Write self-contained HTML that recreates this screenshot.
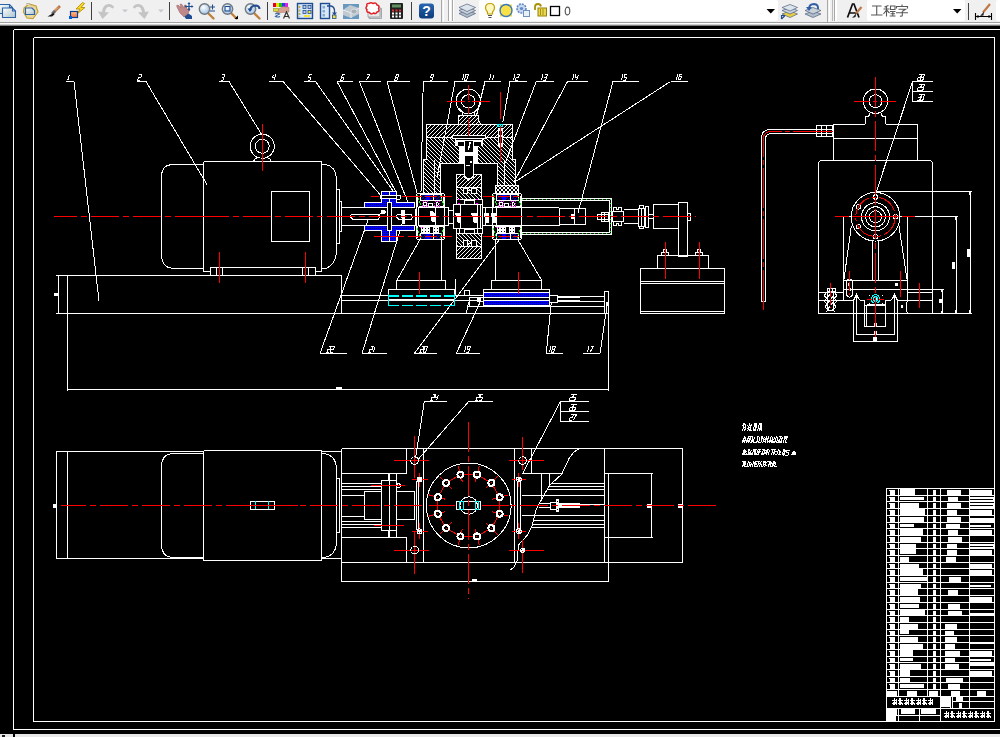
<!DOCTYPE html>
<html><head><meta charset="utf-8"><title>CAD</title>
<style>
html,body{margin:0;padding:0;background:#000;}
body{width:1000px;height:737px;overflow:hidden;position:relative;font-family:"Liberation Sans",sans-serif;}
#cad{position:absolute;left:0;top:0;width:1000px;height:737px;}

#tb{position:absolute;left:0;top:0;width:1000px;height:26px;}
#sb{position:absolute;left:0;top:734px;width:1000px;height:3px;}
</style></head><body>
<svg id="cad" width="1000" height="737" viewBox="0 0 1000 737" shape-rendering="crispEdges" fill="none" stroke="#fff">
<defs>
<pattern id="h1" width="4" height="4" patternUnits="userSpaceOnUse"><path d="M-1 5L5 -1M-1 1L1 -1M3 5L5 3" stroke="#fff" stroke-width="1"/></pattern>
<pattern id="h2" width="4" height="4" patternUnits="userSpaceOnUse"><path d="M-1 -1L5 5M3 -1L5 1M-1 3L1 5" stroke="#fff" stroke-width="1"/></pattern>
<pattern id="hb" width="3" height="3" patternUnits="userSpaceOnUse"><rect width="3" height="3" fill="#000" stroke="none"/><path d="M-1 4L4 -1M-1 1L1 -1M2 4L4 2" stroke="#0000ff" stroke-width="1.3"/></pattern>
<pattern id="hx" width="2" height="2" patternUnits="userSpaceOnUse"><rect width="2" height="2" fill="#0000ff" stroke="none"/><rect width="1" height="1" fill="#000060" stroke="none"/></pattern>
</defs>
<rect x="0" y="0" width="1000" height="737" fill="#000" stroke="none"/>
<path d="M13.5 29.5L1000 29.5" stroke="#fff"/>
<path d="M13.5 29.5L13.5 729.5" stroke="#fff"/>
<path d="M13.5 729.5L1000 729.5" stroke="#fff"/>
<path d="M33.5 37.5L994.5 37.5" stroke="#fff"/>
<path d="M33.5 37.5L33.5 721.5" stroke="#fff"/>
<path d="M33.5 721.5L994.5 721.5" stroke="#fff"/>
<path d="M994.5 37.5L994.5 721.5" stroke="#fff"/>
<path d="M66 81.5L74 81.5" stroke="#fff"/>
<path d="M1.5 0V6" transform="translate(68.4 74.6) skewX(-18) scale(0.8 0.9)" vector-effect="non-scaling-stroke"/>
<path d="M74 81.5L99 301" stroke="#fff"/>
<path d="M137 81.5L146 81.5" stroke="#fff"/>
<path d="M0 0H3V3H0V6H3" transform="translate(139.4 74.6) skewX(-18) scale(0.8 0.9)" vector-effect="non-scaling-stroke"/>
<path d="M146 81.5L207.5 185.5" stroke="#fff"/>
<path d="M219 81.5L229 81.5" stroke="#fff"/>
<path d="M0 0H3V6H0M0 3H3" transform="translate(222.4 74.6) skewX(-18) scale(0.8 0.9)" vector-effect="non-scaling-stroke"/>
<path d="M229 81.5L262 135" stroke="#fff"/>
<path d="M269 81.5L283 81.5" stroke="#fff"/>
<path d="M0 0V3H3M3 0V6" transform="translate(273.4 74.6) skewX(-18) scale(0.8 0.9)" vector-effect="non-scaling-stroke"/>
<path d="M283 81.5L380 194.6" stroke="#fff"/>
<path d="M304 81.5L315.5 81.5" stroke="#fff"/>
<path d="M3 0H0V3H3V6H0" transform="translate(309.4 74.6) skewX(-18) scale(0.8 0.9)" vector-effect="non-scaling-stroke"/>
<path d="M315.5 81.5L394 192.2" stroke="#fff"/>
<path d="M337 81.5L352.5 81.5" stroke="#fff"/>
<path d="M3 0H0V6H3V3H0" transform="translate(342.4 74.6) skewX(-18) scale(0.8 0.9)" vector-effect="non-scaling-stroke"/>
<path d="M337 81.5L396.4 192.8" stroke="#fff"/>
<path d="M359 81.5L381 81.5" stroke="#fff"/>
<path d="M0 0H3L1 6" transform="translate(367.4 74.6) skewX(-18) scale(0.8 0.9)" vector-effect="non-scaling-stroke"/>
<path d="M359.25 81.5L409 204.8" stroke="#fff"/>
<path d="M387 81.5L409.5 81.5" stroke="#fff"/>
<path d="M0 0H3V6H0ZM0 3H3" transform="translate(396.4 74.6) skewX(-18) scale(0.8 0.9)" vector-effect="non-scaling-stroke"/>
<path d="M387 81.5L417.4 194" stroke="#fff"/>
<path d="M423 81.5L447.5 81.5" stroke="#fff"/>
<path d="M3 3H0V0H3V6H0" transform="translate(431.4 74.6) skewX(-18) scale(0.8 0.9)" vector-effect="non-scaling-stroke"/>
<path d="M423.25 81.5L421 192" stroke="#fff"/>
<path d="M455 81.5L475.5 81.5" stroke="#fff"/>
<path d="M1.5 0V6" transform="translate(462.8 74.6) skewX(-18) scale(0.8 0.9)" vector-effect="non-scaling-stroke"/>
<path d="M0 0H3V6H0Z" transform="translate(466 74.6) skewX(-18) scale(0.8 0.9)" vector-effect="non-scaling-stroke"/>
<path d="M455 81.5L437 178" stroke="#fff"/>
<path d="M485 81.5L500.5 81.5" stroke="#fff"/>
<path d="M1.5 0V6" transform="translate(489.8 74.6) skewX(-18) scale(0.8 0.9)" vector-effect="non-scaling-stroke"/>
<path d="M1.5 0V6" transform="translate(493 74.6) skewX(-18) scale(0.8 0.9)" vector-effect="non-scaling-stroke"/>
<path d="M485 81.5L476.5 115.5" stroke="#fff"/>
<path d="M510 81.5L527 81.5" stroke="#fff"/>
<path d="M1.5 0V6" transform="translate(513.8 74.6) skewX(-18) scale(0.8 0.9)" vector-effect="non-scaling-stroke"/>
<path d="M0 0H3V3H0V6H3" transform="translate(517 74.6) skewX(-18) scale(0.8 0.9)" vector-effect="non-scaling-stroke"/>
<path d="M510 81.5L502.9 122" stroke="#fff"/>
<path d="M536 81.5L554 81.5" stroke="#fff"/>
<path d="M1.5 0V6" transform="translate(541.8 74.6) skewX(-18) scale(0.8 0.9)" vector-effect="non-scaling-stroke"/>
<path d="M0 0H3V6H0M0 3H3" transform="translate(545 74.6) skewX(-18) scale(0.8 0.9)" vector-effect="non-scaling-stroke"/>
<path d="M536.25 81.5L504 166" stroke="#fff"/>
<path d="M567.5 81.5L587.5 81.5" stroke="#fff"/>
<path d="M1.5 0V6" transform="translate(572.8 74.6) skewX(-18) scale(0.8 0.9)" vector-effect="non-scaling-stroke"/>
<path d="M0 0V3H3M3 0V6" transform="translate(576 74.6) skewX(-18) scale(0.8 0.9)" vector-effect="non-scaling-stroke"/>
<path d="M567.5 81.5L513.75 182.5" stroke="#fff"/>
<path d="M613 81.5L639 81.5" stroke="#fff"/>
<path d="M1.5 0V6" transform="translate(621.8 74.6) skewX(-18) scale(0.8 0.9)" vector-effect="non-scaling-stroke"/>
<path d="M3 0H0V3H3V6H0" transform="translate(625 74.6) skewX(-18) scale(0.8 0.9)" vector-effect="non-scaling-stroke"/>
<path d="M613 81.5L578 213" stroke="#fff"/>
<path d="M670.5 81.5L687.5 81.5" stroke="#fff"/>
<path d="M1.5 0V6" transform="translate(676.8 74.1) skewX(-18) scale(0.8 0.9)" vector-effect="non-scaling-stroke"/>
<path d="M3 0H0V6H3V3H0" transform="translate(680 74.1) skewX(-18) scale(0.8 0.9)" vector-effect="non-scaling-stroke"/>
<path d="M670.5 81.5L514 182.5" stroke="#fff"/>
<path d="M320 353.5L347 353.5" stroke="#fff"/>
<path d="M0 0H3V3H0V6H3" transform="translate(328.8 346.6) skewX(-18) scale(0.8 0.9)" vector-effect="non-scaling-stroke"/>
<path d="M0 0H3V3H0V6H3" transform="translate(332 346.6) skewX(-18) scale(0.8 0.9)" vector-effect="non-scaling-stroke"/>
<path d="M320 353.5L368.5 219" stroke="#fff"/>
<path d="M362 353.5L387 353.5" stroke="#fff"/>
<path d="M0 0H3V3H0V6H3" transform="translate(370.8 346.6) skewX(-18) scale(0.8 0.9)" vector-effect="non-scaling-stroke"/>
<path d="M1.5 0V6" transform="translate(374 346.6) skewX(-18) scale(0.8 0.9)" vector-effect="non-scaling-stroke"/>
<path d="M362 353.5L404 218" stroke="#fff"/>
<path d="M414 353.5L437 353.5" stroke="#fff"/>
<path d="M0 0H3V3H0V6H3" transform="translate(421.8 346.6) skewX(-18) scale(0.8 0.9)" vector-effect="non-scaling-stroke"/>
<path d="M0 0H3V6H0Z" transform="translate(425 346.6) skewX(-18) scale(0.8 0.9)" vector-effect="non-scaling-stroke"/>
<path d="M414.25 353.5L506 231" stroke="#fff"/>
<path d="M456 353.5L480 353.5" stroke="#fff"/>
<path d="M1.5 0V6" transform="translate(464.8 346.6) skewX(-18) scale(0.8 0.9)" vector-effect="non-scaling-stroke"/>
<path d="M3 3H0V0H3V6H0" transform="translate(468 346.6) skewX(-18) scale(0.8 0.9)" vector-effect="non-scaling-stroke"/>
<path d="M456.25 353.5L480 302.5" stroke="#fff"/>
<path d="M546 353.5L562.5 353.5" stroke="#fff"/>
<path d="M1.5 0V6" transform="translate(549.8 346.6) skewX(-18) scale(0.8 0.9)" vector-effect="non-scaling-stroke"/>
<path d="M0 0H3V6H0ZM0 3H3" transform="translate(553 346.6) skewX(-18) scale(0.8 0.9)" vector-effect="non-scaling-stroke"/>
<path d="M546.25 353.5L551.25 302.5" stroke="#fff"/>
<path d="M583 353.5L600 353.5" stroke="#fff"/>
<path d="M1.5 0V6" transform="translate(587.8 346.6) skewX(-18) scale(0.8 0.9)" vector-effect="non-scaling-stroke"/>
<path d="M0 0H3L1 6" transform="translate(591 346.6) skewX(-18) scale(0.8 0.9)" vector-effect="non-scaling-stroke"/>
<path d="M600 353.5L607.5 302.5" stroke="#fff"/>
<path d="M56 275.5L341.5 275.5" stroke="#fff"/>
<path d="M56 313.5L609 313.5" stroke="#fff"/>
<path d="M341.5 275.5L341.5 313.5" stroke="#fff"/>
<path d="M67.5 275.5L67.5 390.5" stroke="#fff"/>
<path d="M58.5 275.5L58.5 313.5" stroke="#fff"/>
<rect x="54" y="293" width="4" height="3" fill="#fff" stroke="none"/>
<path d="M67.5 389.5L609 389.5" stroke="#fff"/>
<path d="M608.5 313.5L608.5 390.5" stroke="#fff"/>
<rect x="336" y="387" width="6" height="2" fill="#fff" stroke="none"/>
<path d="M203.5 164.5H171.5Q161.5 165.5 161.5 176.5V256.5Q162.5 267.5 172.5 268.5H203.5" stroke="#fff" fill="none" />
<path d="M203.5 161.5L321.5 161.5" stroke="#fff"/>
<path d="M203.5 161.5L203.5 271.5" stroke="#fff"/>
<path d="M321.5 161.5L321.5 271.5" stroke="#fff"/>
<path d="M203.5 271.5L210 271.5" stroke="#fff"/>
<path d="M315 271.5L321.5 271.5" stroke="#fff"/>
<path d="M210.5 267.5L315.5 267.5" stroke="#fff"/>
<rect x="210.5" y="267.5" width="12" height="8" stroke="#fff" fill="none"/>
<path d="M216.5 267.5L216.5 275.5" stroke="#fff"/>
<rect x="302.5" y="267.5" width="13" height="8" stroke="#fff" fill="none"/>
<path d="M308.5 267.5L308.5 275.5" stroke="#fff"/>
<rect x="271.5" y="191.5" width="38" height="50" stroke="#fff" fill="none"/>
<circle cx="262.25" cy="146.25" r="12" stroke="#fff" fill="none"/>
<circle cx="262.25" cy="146.25" r="7" stroke="#fff" fill="none"/>
<path d="M253.5 161.5Q254.5 158.5 257.5 157.5M271.5 161.5Q270.5 158.5 267.5 157.5" stroke="#fff" fill="none" />
<path d="M321.5 164.5H326Q335.5 166.5 336.5 178.5V252.5Q335.5 264.5 326 268.5H321.5" stroke="#fff" fill="none" />
<rect x="336.5" y="189.5" width="3" height="54" stroke="#fff" fill="none"/>
<rect x="339.5" y="201.5" width="2" height="30" stroke="#fff" fill="none"/>
<path d="M341.5 207.5L387 207.5" stroke="#fff"/>
<path d="M341.5 225.5L387 225.5" stroke="#fff"/>
<path d="M351.5 214.5H378Q380.5 217 378 219.5H353.5Q350.5 218.5 350.5 215.5Z" stroke="#fff" fill="none" />
<path d="M364.5 202.5L381.5 202.5L381.5 191.5L396.5 191.5L396.5 202.5L414.5 202.5L414.5 207.5L364.5 207.5Z" fill="url(#hx)" stroke="#fff"/>
<path d="M364.5 225.5L414.5 225.5L414.5 230.5L396.5 230.5L396.5 241.5L381.5 241.5L381.5 230.5L364.5 230.5Z" fill="url(#hx)" stroke="#fff"/>
<path d="M389.5 191L389.5 203" stroke="#fff"/>
<path d="M389.5 230L389.5 242" stroke="#fff"/>
<rect x="387.5" y="202.5" width="4" height="28" stroke="#fff" fill="#000"/>
<rect x="380" y="195" width="20" height="4" fill="#fff" stroke="none"/>
<rect x="382" y="196" width="14" height="2" fill="#000" stroke="none"/>
<circle cx="398.5" cy="197.3" r="2.2" stroke="#fff" fill="#000"/>
<path d="M397.5 214.5H411Q413.5 217 411 219.5H399.5Q396.5 218.5 396.5 215.5Z" stroke="#fff" fill="none" />
<path d="M415.5 208.5L415.5 225.5" stroke="#fff"/>
<rect x="418.5" y="207.5" width="30" height="18" stroke="#fff" fill="none"/>
<path d="M435.5 207.5L435.5 225.5" stroke="#fff"/>
<rect x="448.5" y="210.5" width="5" height="13" stroke="#fff" fill="none"/>
<path d="M482 207.5L559 207.5" stroke="#fff"/>
<path d="M482 225.5L559 225.5" stroke="#fff"/>
<path d="M485.5 207.5L485.5 225.5" stroke="#fff"/>
<path d="M496.5 207.5L496.5 225.5" stroke="#fff"/>
<path d="M418.5 193.5H442.5Q444.5 193.5 444.5 195.5V237.5Q444.5 239.5 442.5 239.5H418.5Q416.5 239.5 416.5 237.5V195.5Q416.5 193.5 418.5 193.5Z" stroke="#fff" fill="none" />
<path d="M417.5 195.5L417.5 207" stroke="#fff"/>
<path d="M443.5 195.5L443.5 207" stroke="#fff"/>
<path d="M417.5 226L417.5 237.5" stroke="#fff"/>
<path d="M443.5 226L443.5 237.5" stroke="#fff"/>
<rect x="420.5" y="195" width="21" height="5" fill="url(#hb)" stroke="none"/>
<rect x="425.5" y="195" width="4" height="5" fill="#0000ff" stroke="none"/>
<rect x="420.5" y="194.5" width="21" height="6" stroke="#fff" fill="none"/>
<path d="M433.5 194L433.5 200" stroke="#fff"/>
<rect x="420.5" y="234" width="21" height="5" fill="url(#hb)" stroke="none"/>
<rect x="425.5" y="234" width="4" height="5" fill="#0000ff" stroke="none"/>
<rect x="420.5" y="233.5" width="21" height="6" stroke="#fff" fill="none"/>
<path d="M433.5 233L433.5 239" stroke="#fff"/>
<path d="M418.5 206.5L442.5 206.5" stroke="#fff"/>
<rect x="422.5" y="201.5" width="5" height="5" stroke="#ff00ff" fill="none" stroke-dasharray="1 1"/>
<circle cx="425" cy="204" r="1.6" stroke="#fff" fill="none"/>
<rect x="428.5" y="203.5" width="4" height="3" stroke="#fff" fill="none"/>
<rect x="434.5" y="201.5" width="5" height="5" stroke="#ff00ff" fill="none" stroke-dasharray="1 1"/>
<path d="M436 202.5V205.5H437.5Q439.5 204 437.5 202.5Z" stroke="#fff" fill="none" />
<path d="M418.5 226.5L442.5 226.5" stroke="#fff"/>
<rect x="421.5" y="227.5" width="2" height="2" stroke="#fff" fill="none"/>
<rect x="421.5" y="230.5" width="2" height="2" stroke="#fff" fill="none"/>
<rect x="424.5" y="227.5" width="2" height="2" stroke="#fff" fill="none"/>
<rect x="424.5" y="230.5" width="2" height="2" stroke="#fff" fill="none"/>
<rect x="427.5" y="227.5" width="2" height="2" stroke="#fff" fill="none"/>
<rect x="427.5" y="230.5" width="2" height="2" stroke="#fff" fill="none"/>
<rect x="433.5" y="227.5" width="2" height="2" stroke="#fff" fill="none"/>
<rect x="433.5" y="230.5" width="2" height="2" stroke="#fff" fill="none"/>
<rect x="436.5" y="227.5" width="2" height="2" stroke="#fff" fill="none"/>
<rect x="436.5" y="230.5" width="2" height="2" stroke="#fff" fill="none"/>
<path d="M419.5 227.5L423.5 227.5" stroke="#ff00ff" stroke-dasharray="1 1"/>
<path d="M417.5 195L420.5 205" stroke="#00ff00" stroke-dasharray="2 1"/>
<path d="M440.5 195L443.5 205" stroke="#00ff00" stroke-dasharray="2 1"/>
<path d="M417.5 228L420.5 238" stroke="#00ff00" stroke-dasharray="2 1"/>
<path d="M440.5 238L443.5 228" stroke="#00ff00" stroke-dasharray="2 1"/>
<path d="M494.5 193.5H519.5Q521.5 193.5 521.5 195.5V237.5Q521.5 239.5 519.5 239.5H494.5Q492.5 239.5 492.5 237.5V195.5Q492.5 193.5 494.5 193.5Z" stroke="#fff" fill="none" />
<path d="M493.5 195.5L493.5 207" stroke="#fff"/>
<path d="M520.5 195.5L520.5 207" stroke="#fff"/>
<path d="M493.5 226L493.5 237.5" stroke="#fff"/>
<path d="M520.5 226L520.5 237.5" stroke="#fff"/>
<rect x="496.5" y="195" width="22" height="5" fill="url(#hb)" stroke="none"/>
<rect x="502" y="195" width="4" height="5" fill="#0000ff" stroke="none"/>
<rect x="496.5" y="194.5" width="22" height="6" stroke="#fff" fill="none"/>
<path d="M510.5 194L510.5 200" stroke="#fff"/>
<rect x="496.5" y="234" width="22" height="5" fill="url(#hb)" stroke="none"/>
<rect x="502" y="234" width="4" height="5" fill="#0000ff" stroke="none"/>
<rect x="496.5" y="233.5" width="22" height="6" stroke="#fff" fill="none"/>
<path d="M510.5 233L510.5 239" stroke="#fff"/>
<path d="M494.5 206.5L519.5 206.5" stroke="#fff"/>
<rect x="498.5" y="201.5" width="5" height="5" stroke="#ff00ff" fill="none" stroke-dasharray="1 1"/>
<circle cx="501" cy="204" r="1.6" stroke="#fff" fill="none"/>
<rect x="504.5" y="203.5" width="4" height="3" stroke="#fff" fill="none"/>
<rect x="510.5" y="201.5" width="5" height="5" stroke="#ff00ff" fill="none" stroke-dasharray="1 1"/>
<path d="M512 202.5V205.5H513.5Q515.5 204 513.5 202.5Z" stroke="#fff" fill="none" />
<path d="M494.5 226.5L519.5 226.5" stroke="#fff"/>
<rect x="497.5" y="227.5" width="2" height="2" stroke="#fff" fill="none"/>
<rect x="497.5" y="230.5" width="2" height="2" stroke="#fff" fill="none"/>
<rect x="500.5" y="227.5" width="2" height="2" stroke="#fff" fill="none"/>
<rect x="500.5" y="230.5" width="2" height="2" stroke="#fff" fill="none"/>
<rect x="503.5" y="227.5" width="2" height="2" stroke="#fff" fill="none"/>
<rect x="503.5" y="230.5" width="2" height="2" stroke="#fff" fill="none"/>
<rect x="509.5" y="227.5" width="2" height="2" stroke="#fff" fill="none"/>
<rect x="509.5" y="230.5" width="2" height="2" stroke="#fff" fill="none"/>
<rect x="512.5" y="227.5" width="2" height="2" stroke="#fff" fill="none"/>
<rect x="512.5" y="230.5" width="2" height="2" stroke="#fff" fill="none"/>
<path d="M495.5 227.5L499.5 227.5" stroke="#ff00ff" stroke-dasharray="1 1"/>
<path d="M493.5 195L496.5 205" stroke="#00ff00" stroke-dasharray="2 1"/>
<path d="M517.5 195L520.5 205" stroke="#00ff00" stroke-dasharray="2 1"/>
<path d="M493.5 228L496.5 238" stroke="#00ff00" stroke-dasharray="2 1"/>
<path d="M517.5 238L520.5 228" stroke="#00ff00" stroke-dasharray="2 1"/>
<circle cx="468.3" cy="101.4" r="12.3" stroke="#fff" fill="none"/>
<circle cx="468.3" cy="101.4" r="6.7" stroke="#fff" fill="none"/>
<path d="M459.4 108.3L462.5 111.5L462.5 115.5" stroke="#fff" fill="none"/>
<path d="M477.8 108.3L474.5 111.5L474.5 115.5" stroke="#fff" fill="none"/>
<rect x="468" y="101" width="2" height="1" fill="#ff0000" stroke="none"/>
<path d="M458.5 115.5L478.5 115.5L478.5 121L481.5 124.5L458.5 124.5Z" fill="url(#h1)" stroke="#fff"/>
<path d="M426.5 124.5L512.5 124.5L512.5 137.5L426.5 137.5Z" fill="url(#h1)" stroke="#fff"/>
<path d="M426.5 137.5L455.5 137.5L455.5 145.5L459.5 145.5L459.5 163.5L440.5 163.5L440.5 193.5L423.5 193.5L423.5 159.5L426.5 159.5Z" fill="url(#h2)" stroke="#fff"/>
<path d="M512.5 137.5L482.5 137.5L482.5 145.5L477.5 145.5L477.5 163.5L497.5 163.5L497.5 185.5L515.5 185.5L515.5 159.5L512.5 159.5Z" fill="url(#h2)" stroke="#fff"/>
<path d="M434.5 160L434.5 193" stroke="#fff"/>
<path d="M504.5 160L504.5 185" stroke="#fff"/>
<path d="M495.5 185.5H518.5V193.5H495.5Z" fill="url(#h2)" stroke="#fff"/>
<path d="M495.5 185.5H518.5V193.5H495.5Z" fill="url(#h1)" stroke="none"/>
<rect x="452.5" y="135.5" width="33" height="3" stroke="#fff" fill="#000"/>
<rect x="455" y="140" width="28" height="6" fill="#fff" stroke="none"/>
<rect x="460" y="140" width="18" height="24" fill="#fff" stroke="none"/>
<rect x="458" y="142" width="6" height="4" fill="#000" stroke="none"/>
<rect x="474" y="142" width="7" height="4" fill="#000" stroke="none"/>
<rect x="465" y="141" width="8" height="11" fill="#000" stroke="none"/>
<rect x="465" y="156" width="8" height="10" fill="#000" stroke="none"/>
<rect x="465" y="168" width="8" height="9" fill="#000" stroke="none"/>
<path d="M469 142L471 142L469 150L468 150Z" stroke="none" fill="#fff"/>
<rect x="470" y="161" width="2" height="2" fill="#fff" stroke="none"/>
<rect x="466" y="165" width="4" height="1" fill="#fff" stroke="none"/>
<path d="M464.5 164L464.5 176" stroke="#fff"/>
<path d="M473.5 164L473.5 176" stroke="#fff"/>
<path d="M464.5 176Q468.5 181 473.5 176" stroke="#fff" fill="none" />
<rect x="497" y="124" width="6" height="3" fill="#00ffff" stroke="none"/>
<rect x="499" y="125" width="1" height="1" fill="#000" stroke="none"/>
<rect x="501" y="125" width="1" height="1" fill="#000" stroke="none"/>
<rect x="498" y="128" width="5" height="19" fill="#fff" stroke="none"/>
<rect x="499" y="131" width="3" height="4" fill="#000" stroke="none"/>
<rect x="499" y="137" width="3" height="6" fill="#000" stroke="none"/>
<path d="M456.5 174.5L464.5 174.5L464.5 177L468.5 180L473.5 177L473.5 174.5L481.5 174.5L481.5 187.5L456.5 187.5Z" fill="url(#h1)" stroke="#fff"/>
<path d="M456.5 187.5L481.5 187.5L481.5 199.5L456.5 199.5Z" fill="url(#h2)" stroke="#fff"/>
<rect x="463.5" y="188.5" width="4" height="5" stroke="#fff" fill="#000"/>
<rect x="471.5" y="188.5" width="5" height="5" stroke="#fff" fill="#000"/>
<path d="M467 190.5L471 190.5" stroke="#fff"/>
<rect x="456.5" y="199.5" width="26" height="5" stroke="#fff" fill="#000"/>
<rect x="464.5" y="200.5" width="10" height="4" stroke="#fff" fill="#000"/>
<path d="M458 199.5L462 199.5" stroke="#ff00ff" stroke-dasharray="2 2"/>
<path d="M476 199.5L480 199.5" stroke="#ff00ff" stroke-dasharray="2 2"/>
<path d="M458 203.5L462 203.5" stroke="#ff00ff" stroke-dasharray="2 2"/>
<path d="M476 203.5L480 203.5" stroke="#ff00ff" stroke-dasharray="2 2"/>
<rect x="453.5" y="204.5" width="29" height="24" stroke="#fff" fill="#000"/>
<path d="M460.5 204.5L460.5 228.5" stroke="#fff"/>
<path d="M477.5 204.5L477.5 228.5" stroke="#fff"/>
<path d="M480.5 204.5L480.5 228.5" stroke="#fff"/>
<rect x="456.5" y="228.5" width="26" height="5" stroke="#fff" fill="#000"/>
<rect x="464.5" y="229.5" width="10" height="4" stroke="#fff" fill="#000"/>
<path d="M459.5 228L459.5 233" stroke="#fff"/>
<path d="M477.5 228L477.5 233" stroke="#fff"/>
<path d="M456.5 233.5L481.5 233.5L481.5 246.5L456.5 246.5Z" fill="url(#h2)" stroke="#fff"/>
<rect x="463.5" y="240.5" width="4" height="6" stroke="#fff" fill="#000"/>
<rect x="471.5" y="240.5" width="5" height="6" stroke="#fff" fill="#000"/>
<path d="M467 243.5L471 243.5" stroke="#fff"/>
<path d="M456.5 246.5L481.5 246.5L481.5 258.5L456.5 258.5Z" fill="url(#h1)" stroke="#fff"/>
<path d="M522 198.5L612 198.5" stroke="#fff"/>
<path d="M522 234.5L612 234.5" stroke="#fff"/>
<path d="M611.5 198L611.5 235" stroke="#fff"/>
<path d="M522 200.5L610 200.5" stroke="#fff"/>
<path d="M522 232.5L610 232.5" stroke="#fff"/>
<path d="M609.5 200L609.5 233" stroke="#fff"/>
<path d="M522 199.5L611 199.5" stroke="#00ff00" stroke-dasharray="1 3"/>
<path d="M522 233.5L611 233.5" stroke="#00ff00" stroke-dasharray="1 3"/>
<path d="M610.5 199L610.5 234" stroke="#00ff00" stroke-dasharray="1 3"/>
<path d="M559.5 207.5L559.5 225.5" stroke="#fff"/>
<rect x="559.5" y="208.5" width="26" height="16" stroke="#fff" fill="none"/>
<path d="M574.5 208.5L574.5 224.5" stroke="#fff"/>
<rect x="571" y="214" width="4" height="5" fill="#fff" stroke="none"/>
<rect x="597.5" y="214.5" width="12" height="5" stroke="#fff" fill="none"/>
<rect x="601.5" y="212.5" width="7" height="9" stroke="#fff" fill="none"/>
<path d="M604.5 212L604.5 221" stroke="#fff"/>
<rect x="612.5" y="211.5" width="11" height="10" stroke="#fff" fill="none"/>
<path d="M613.5 211.5V207.5H616.5V209.5H618.5V207.5H621.5V211.5M613.5 221.5V225.5H616.5V223.5H618.5V225.5H621.5V221.5" stroke="#fff" fill="none" />
<path d="M623.5 209.5L638 209.5" stroke="#fff"/>
<path d="M623.5 223.5L638 223.5" stroke="#fff"/>
<rect x="638.5" y="208.5" width="6" height="18" stroke="#fff" fill="none"/>
<path d="M641.5 208L641.5 226" stroke="#fff"/>
<path d="M639.5 208.5V205.5H643.5V208.5M639.5 226.5V228.5H643.5V226.5" stroke="#fff" fill="none" />
<rect x="645.5" y="206.5" width="3" height="21" stroke="#fff" fill="none"/>
<path d="M648 214.5L653 214.5" stroke="#fff"/>
<path d="M648 218.5L653 218.5" stroke="#fff"/>
<rect x="653.5" y="204.5" width="25" height="24" stroke="#fff" fill="none"/>
<rect x="678.5" y="202.5" width="9" height="54" stroke="#fff" fill="none"/>
<path d="M678.5 214L678.5 219" stroke="#fff"/>
<rect x="687.5" y="213.5" width="3" height="7" stroke="#fff" fill="none"/>
<rect x="657.5" y="255.5" width="51" height="13" stroke="#fff" fill="none"/>
<rect x="640.5" y="268.5" width="84" height="45" stroke="#fff" fill="none"/>
<path d="M640.5 281.5L724.5 281.5" stroke="#fff"/>
<path d="M640.5 283.5L724.5 283.5" stroke="#fff"/>
<path d="M640.5 311.5L724.5 311.5" stroke="#fff"/>
<rect x="661.5" y="252.5" width="7" height="3" stroke="#fff" fill="none"/>
<rect x="663.5" y="249.5" width="3" height="3" stroke="#fff" fill="none"/>
<rect x="695.5" y="252.5" width="7" height="3" stroke="#fff" fill="none"/>
<rect x="697.5" y="249.5" width="3" height="3" stroke="#fff" fill="none"/>
<path d="M420 239.5L397 280" stroke="#fff"/>
<path d="M441.5 239.5L441.5 280" stroke="#fff"/>
<path d="M396 280.5L446 280.5" stroke="#fff"/>
<path d="M396.5 280.5L396.5 289.5" stroke="#fff"/>
<path d="M445.5 280.5L445.5 289.5" stroke="#fff"/>
<path d="M495.5 239.5L495.5 280" stroke="#fff"/>
<path d="M518 240L541.5 280" stroke="#fff"/>
<path d="M491 280.5L542 280.5" stroke="#fff"/>
<path d="M491.5 280.5L491.5 289.5" stroke="#fff"/>
<path d="M541.5 280.5L541.5 289.5" stroke="#fff"/>
<path d="M388 289.5L455 289.5" stroke="#fff"/>
<path d="M388.5 289.5L388.5 306" stroke="#fff"/>
<path d="M454.5 289.5L454.5 306" stroke="#fff"/>
<path d="M388.5 294L388.5 306" stroke="#00ffff"/>
<path d="M454.5 294L454.5 306" stroke="#00ffff"/>
<path d="M388 295.5L455 295.5" stroke="#00ffff" stroke-width="2" stroke-dasharray="11 3"/>
<path d="M388 305.5L455 305.5" stroke="#00ffff" stroke-dasharray="11 3"/>
<rect x="389" y="299" width="65" height="2" fill="#fff" stroke="none"/>
<path d="M341.5 295.5L388 295.5" stroke="#fff"/>
<path d="M341.5 300.5L388 300.5" stroke="#fff"/>
<path d="M455.5 279L455.5 295" stroke="#fff"/>
<path d="M455 295.5L483 295.5" stroke="#fff"/>
<path d="M455 300.5L478 300.5" stroke="#fff"/>
<rect x="464.5" y="290.5" width="5" height="5" stroke="#fff" fill="none"/>
<path d="M469 297.5L478 297.5" stroke="#fff"/>
<path d="M469.5 297.5L469.5 306" stroke="#fff"/>
<path d="M469.5 300.5L467.5 306.5L466.5 313.5" stroke="#fff" fill="none"/>
<path d="M468 306.5L483 306.5" stroke="#fff"/>
<rect x="477.5" y="297.5" width="6" height="4" stroke="#fff" fill="none"/>
<rect x="478" y="298" width="3" height="3" fill="#fff" stroke="none"/>
<path d="M483 289.5L549.5 289.5" stroke="#fff"/>
<path d="M483.5 289.5L483.5 306.5" stroke="#fff"/>
<path d="M549.5 289.5L549.5 306.5" stroke="#fff"/>
<path d="M483 306.5L605 306.5" stroke="#fff"/>
<rect x="484" y="292" width="65" height="5" fill="url(#hx)" stroke="none"/>
<rect x="484" y="301" width="65" height="4" fill="url(#hx)" stroke="none"/>
<path d="M484 292.5L549 292.5" stroke="#fff"/>
<path d="M484 297.5L549 297.5" stroke="#fff"/>
<path d="M484 300.5L549 300.5" stroke="#fff"/>
<path d="M484 305.5L549 305.5" stroke="#fff"/>
<rect x="549.5" y="295.5" width="8" height="7" stroke="#fff" fill="none"/>
<rect x="557" y="296" width="23" height="2" fill="#fff" stroke="none"/>
<rect x="557" y="300" width="23" height="2" fill="#fff" stroke="none"/>
<path d="M580 296.5L605 296.5" stroke="#fff"/>
<path d="M580 301.5L605 301.5" stroke="#fff"/>
<rect x="604.5" y="291.5" width="4" height="22" stroke="#fff" fill="none"/>
<path d="M606.5 302L606.5 313" stroke="#fff"/>
<path d="M430 212L432 211L434 213L435 221L432 221L431 216Z" stroke="#fff" fill="#fff"/>
<path d="M455 213L460 213L460 222L458 222L457 217Z" stroke="#fff" fill="#fff"/>
<path d="M471 213L476 213L476 222L474 222L473 217Z" stroke="#fff" fill="#fff"/>
<path d="M484 213L488 213L488 222L486 222L485 217Z" stroke="#fff" fill="#fff"/>
<path d="M491 213L495 213L495 222L493 222L492 217Z" stroke="#fff" fill="#fff"/>
<path d="M401 211L404 210L405 223L403 224L402 218Z" stroke="#fff" fill="#fff"/>
<path d="M381 211L384 210L386 212L383 214Z" stroke="#fff" fill="#fff"/>
<path d="M378.5 216.5Q379 213.5 382.5 212.5" stroke="#fff" fill="none" />
<circle cx="875.5" cy="101.2" r="12.2" stroke="#fff" fill="none"/>
<circle cx="875.5" cy="101.2" r="6.5" stroke="#fff" fill="none"/>
<path d="M869.5 112.5V115Q869 116.5 865.5 117V123.5Q865 124.5 862 124.5H833.5V160.5H917.5V124.5H889Q886 124.5 885.5 123.5V117Q882 116.5 881.5 115V112.5" stroke="#fff" fill="none" />
<path d="M833.5 138.5L917.5 138.5" stroke="#fff"/>
<path d="M818.5 313.5V162.5L820.5 160.5H930.5L932.5 162.5V313.5" stroke="#fff" fill="none" />
<path d="M818.5 313.5L972 313.5" stroke="#fff"/>
<path d="M816.5 129.5H770Q761.5 130 761.5 138V301.5" stroke="#fff" fill="none" />
<path d="M816.5 133.5H771Q765.5 134 765.5 139V301.5" stroke="#fff" fill="none" />
<path d="M761.5 301.5L765.5 301.5" stroke="#fff"/>
<rect x="816.5" y="125.5" width="16" height="11" stroke="#fff" fill="none"/>
<path d="M816 129.5L832 129.5" stroke="#fff"/>
<path d="M816 133.5L832 133.5" stroke="#fff"/>
<path d="M821.5 125L821.5 136" stroke="#fff"/>
<path d="M826.5 125L826.5 136" stroke="#fff"/>
<path d="M912.5 81.5L933 81.5" stroke="#fff"/>
<path d="M912.5 91.5L933 91.5" stroke="#fff"/>
<path d="M912.5 101.5L933 101.5" stroke="#fff"/>
<path d="M912.5 81.5L912.5 101.5" stroke="#fff"/>
<path d="M0 0H3V3H0V6H3" transform="translate(919 74.6) skewX(-18) scale(0.8 0.9)" vector-effect="non-scaling-stroke"/>
<path d="M0 0H3V6H0ZM0 3H3" transform="translate(922.2 74.6) skewX(-18) scale(0.8 0.9)" vector-effect="non-scaling-stroke"/>
<path d="M0 0H3V3H0V6H3" transform="translate(919 84.6) skewX(-18) scale(0.8 0.9)" vector-effect="non-scaling-stroke"/>
<path d="M3 3H0V0H3V6H0" transform="translate(922.2 84.6) skewX(-18) scale(0.8 0.9)" vector-effect="non-scaling-stroke"/>
<path d="M0 0H3V6H0M0 3H3" transform="translate(919 94.6) skewX(-18) scale(0.8 0.9)" vector-effect="non-scaling-stroke"/>
<path d="M0 0H3V6H0Z" transform="translate(922.2 94.6) skewX(-18) scale(0.8 0.9)" vector-effect="non-scaling-stroke"/>
<path d="M912.5 81.5L876.5 191.5" stroke="#fff"/>
<circle cx="875.5" cy="216.8" r="24.3" stroke="#fff" fill="none"/>
<circle cx="875.5" cy="216.8" r="14" stroke="#fff" fill="none"/>
<circle cx="875.5" cy="216.8" r="10" stroke="#fff" fill="none"/>
<circle cx="875.5" cy="216.8" r="6" stroke="#fff" fill="none"/>
<circle cx="875.5" cy="197" r="2.2" stroke="#fff" fill="none"/>
<circle cx="858.35" cy="206.9" r="2.2" stroke="#fff" fill="none"/>
<circle cx="858.35" cy="226.7" r="2.2" stroke="#fff" fill="none"/>
<circle cx="875.5" cy="236.6" r="2.2" stroke="#fff" fill="none"/>
<circle cx="895.3" cy="216.8" r="2.2" stroke="#fff" fill="none"/>
<path d="M875.5 191.5L972 191.5" stroke="#fff"/>
<path d="M970.5 191.5L970.5 313.5" stroke="#fff"/>
<rect x="969" y="192" width="1" height="3" fill="#fff" stroke="none"/>
<rect x="969" y="310" width="1" height="3" fill="#fff" stroke="none"/>
<path d="M899 216.5L958 216.5" stroke="#fff"/>
<path d="M956.5 216.5L956.5 313.5" stroke="#fff"/>
<rect x="955" y="217" width="1" height="3" fill="#fff" stroke="none"/>
<rect x="955" y="310" width="1" height="3" fill="#fff" stroke="none"/>
<rect x="967" y="249" width="3" height="8" fill="#fff" stroke="none"/>
<rect x="952" y="262" width="3" height="7" fill="#fff" stroke="none"/>
<rect x="939" y="299" width="3" height="4" fill="#fff" stroke="none"/>
<path d="M942.5 289.5L942.5 313.5" stroke="#fff"/>
<rect x="941" y="290" width="1" height="2" fill="#fff" stroke="none"/>
<rect x="941" y="311" width="1" height="2" fill="#fff" stroke="none"/>
<path d="M843.5 216.5L851.5 216.5" stroke="#fff"/>
<path d="M843.5 216.5L843.5 300.5" stroke="#fff"/>
<path d="M907.5 216.5L907.5 300.5" stroke="#fff"/>
<path d="M851.3 226.4L844 279" stroke="#fff"/>
<path d="M899 226.4L907 279" stroke="#fff"/>
<path d="M872.5 240.5L872.5 280.5" stroke="#fff"/>
<path d="M878.5 240.5L878.5 280.5" stroke="#fff"/>
<path d="M843.5 280.5L907.5 280.5" stroke="#fff"/>
<path d="M843.5 289.5L944 289.5" stroke="#fff"/>
<path d="M907.5 292.5L932.5 292.5" stroke="#fff"/>
<path d="M907.5 300.5L932.5 300.5" stroke="#fff"/>
<path d="M818.5 292.5L843.5 292.5" stroke="#fff"/>
<path d="M818.5 300.5H853.5L856.5 294.5L858.5 298.5L860.5 300.5H864.5V305.5H885.5V300.5H890.5L892.5 298.5L894.5 294.5L897.5 300.5H907.5" stroke="#fff" fill="none" />
<path d="M866.5 304.5L884.5 304.5" stroke="#fff"/>
<path d="M853.5 300.5L853.5 341.5" stroke="#fff"/>
<path d="M897.5 300.5L897.5 341.5" stroke="#fff"/>
<path d="M853.5 341.5L897.5 341.5" stroke="#fff"/>
<path d="M856.5 296L856.5 334.5" stroke="#fff"/>
<path d="M894.5 296L894.5 334.5" stroke="#fff"/>
<path d="M856.5 334.5L894.5 334.5" stroke="#fff"/>
<path d="M864.5 305.5L864.5 326.5" stroke="#fff"/>
<path d="M885.5 305.5L885.5 326.5" stroke="#fff"/>
<path d="M864.5 326.5L885.5 326.5" stroke="#fff"/>
<path d="M866.5 305.5L866.5 326.5" stroke="#fff"/>
<rect x="874" y="323" width="3" height="3" fill="#fff" stroke="none"/>
<rect x="874" y="331" width="3" height="3" fill="#fff" stroke="none"/>
<rect x="873" y="337" width="4" height="4" fill="#fff" stroke="none"/>
<circle cx="875.5" cy="299" r="4.2" stroke="#00ffff" fill="none"/>
<circle cx="875.5" cy="299" r="2.2" stroke="#00ffff" fill="none"/>
<rect x="875" y="298" width="2" height="2" fill="#fff" stroke="none"/>
<path d="M871.5 296.5L873 295M879.5 296.5L878 295M871.5 301.5L873 303M879.5 301.5L878 303" stroke="#00ffff" fill="none" />
<rect x="869" y="295" width="1" height="1" fill="#fff" stroke="none"/>
<rect x="882" y="295" width="1" height="1" fill="#fff" stroke="none"/>
<rect x="869" y="303" width="1" height="1" fill="#fff" stroke="none"/>
<rect x="882" y="303" width="1" height="1" fill="#fff" stroke="none"/>
<rect x="827.5" y="288.5" width="8" height="3" stroke="#fff" fill="none"/>
<path d="M829.5 288L829.5 291" stroke="#fff"/>
<path d="M832.5 288L832.5 291" stroke="#fff"/>
<path d="M827.5 292.5V309Q830.5 312.5 833.5 309V292.5" stroke="#fff" fill="none" />
<path d="M825.5 293L824.5 296L826.5 298L824.5 301L826.5 304L825.5 307L827.5 310L826.5 312M835.5 293L836.5 296L834.5 298L836.5 301L834.5 304L835.5 307L833.5 310L834.5 312" stroke="#fff" fill="none" />
<path d="M829.5 294L828.5 297M832.5 296L831.5 299M829.5 300L828.5 303M832.5 302L831.5 305M829.5 306L828.5 309" stroke="#fff" fill="none" />
<path d="M846.5 281V295Q849.5 299.500 852.5 295V281Q849.5 276.500 846.5 281Z" stroke="#fff" fill="none" />
<path d="M848 283L849 286M851 288L850 291" stroke="#fff" fill="none" />
<rect x="895" y="283" width="3" height="3" fill="#fff" stroke="none"/>
<rect x="901" y="305" width="2" height="3" fill="#fff" stroke="none"/>
<path d="M907.5 300.5Q904.5 307 907.5 313.5" stroke="#fff" fill="none" />
<path d="M56 451.5L203.5 451.5" stroke="#fff"/>
<path d="M321.5 451.5L341.5 451.5" stroke="#fff"/>
<path d="M56 558.5L203.5 558.5" stroke="#fff"/>
<path d="M321.5 558.5L341.5 558.5" stroke="#fff"/>
<path d="M56.5 451.5L56.5 558.5" stroke="#fff"/>
<path d="M67.5 451.5L67.5 558.5" stroke="#fff"/>
<rect x="53" y="504" width="4" height="4" fill="#fff" stroke="none"/>
<path d="M203.5 453.5H172Q161.5 455 161.5 466V545Q161.5 556 172 557.5H203.5" stroke="#fff" fill="none" />
<path d="M203.5 450.5L321.5 450.5" stroke="#fff"/>
<path d="M203.5 560.5L321.5 560.5" stroke="#fff"/>
<path d="M203.5 450.5L203.5 560.5" stroke="#fff"/>
<path d="M321.5 450.5L321.5 560.5" stroke="#fff"/>
<rect x="250.5" y="501.5" width="24" height="8" stroke="#fff" fill="none"/>
<path d="M255.5 501L255.5 509" stroke="#00ffff"/>
<path d="M268.5 501L268.5 509" stroke="#00ffff"/>
<path d="M321.5 453.5H325Q336 456 336.5 468V543Q336 555 325 557.5H321.5" stroke="#fff" fill="none" />
<rect x="336.5" y="478.5" width="3" height="54" stroke="#fff" fill="none"/>
<path d="M341.5 448.5L682.5 448.5" stroke="#fff"/>
<path d="M341.5 562.5L682.5 562.5" stroke="#fff"/>
<path d="M341.5 448.5L341.5 582" stroke="#fff"/>
<path d="M682.5 448.5L682.5 562.5" stroke="#fff"/>
<path d="M341.5 581.5L608.5 581.5" stroke="#fff"/>
<path d="M608.5 473.5L608.5 582" stroke="#fff"/>
<rect x="472" y="579" width="5" height="2" fill="#fff" stroke="none"/>
<path d="M341.5 473.5L406.5 473.5" stroke="#fff"/>
<path d="M341.5 537.5L406.5 537.5" stroke="#fff"/>
<path d="M406.5 448.5L406.5 473.5" stroke="#fff"/>
<path d="M406.5 537.5L406.5 562.5" stroke="#fff"/>
<path d="M423.5 448.5L423.5 562.5" stroke="#fff"/>
<path d="M341.5 483.5L381 483.5" stroke="#fff"/>
<path d="M341.5 527.5L381 527.5" stroke="#fff"/>
<path d="M341.5 486.5L381 486.5" stroke="#fff"/>
<path d="M341.5 524.5L381 524.5" stroke="#fff"/>
<path d="M341.5 489.5L381 489.5" stroke="#fff"/>
<path d="M341.5 521.5L381 521.5" stroke="#fff"/>
<path d="M341.5 495.5L364 495.5" stroke="#fff"/>
<path d="M341.5 516.5L364 516.5" stroke="#fff"/>
<path d="M339.5 484L339.5 527" stroke="#fff"/>
<rect x="364.5" y="491.5" width="17" height="28" stroke="#fff" fill="none"/>
<rect x="381.5" y="480.5" width="15" height="50" stroke="#fff" fill="none"/>
<path d="M389.5 473.5L389.5 537.5" stroke="#fff"/>
<path d="M388.5 473.5L388.5 480" stroke="#fff"/>
<path d="M396.5 473.5L396.5 480" stroke="#fff"/>
<path d="M388.5 530L388.5 537.5" stroke="#fff"/>
<path d="M396.5 530L396.5 537.5" stroke="#fff"/>
<rect x="396.5" y="491.5" width="18" height="28" stroke="#fff" fill="none"/>
<circle cx="398.5" cy="485.8" r="2" stroke="#fff" fill="none"/>
<rect x="416.5" y="481.5" width="2" height="48" stroke="#fff" fill="none"/>
<rect x="517.5" y="481.5" width="3" height="48" stroke="#fff" fill="none"/>
<circle cx="468.7" cy="505.5" r="42.4" stroke="#fff" fill="none"/>
<circle cx="468.7" cy="505.5" r="8.7" stroke="#fff" fill="none"/>
<rect x="456.5" y="501.5" width="24" height="8" stroke="#fff" fill="none"/>
<rect x="459.5" y="501.5" width="4" height="8" stroke="#00ffff" fill="none"/>
<rect x="475.5" y="501.5" width="3" height="8" stroke="#00ffff" fill="none"/>
<path d="M514.5 448.5L514.5 562.5" stroke="#fff"/>
<path d="M531.5 448.5L531.5 473.5" stroke="#fff"/>
<path d="M522 473.5L562 473.5" stroke="#fff"/>
<path d="M541.5 473.5L541.5 499" stroke="#fff"/>
<path d="M549.5 473.5L549.5 486" stroke="#fff"/>
<path d="M579.7 448.5L574 452L569.3 458L565 467L561.7 474.2L556 479.5L550.3 484.6L545 493L540.8 500.8L536 510.2L534 518L532.3 525.4L527.5 535L522 541L519 544.4L517.5 553L517 561.5L514 567L510.4 570" stroke="#fff" fill="none"/>
<path d="M551.5 483.5L604.5 483.5" stroke="#fff"/>
<path d="M549.5 486.5L604.5 486.5" stroke="#fff"/>
<path d="M547.5 489.5L604.5 489.5" stroke="#fff"/>
<path d="M521.8 495.5L604.5 495.5" stroke="#fff"/>
<path d="M521.8 515.5L604.5 515.5" stroke="#fff"/>
<path d="M534 520.5L604.5 520.5" stroke="#fff"/>
<path d="M532.5 524.5L604.5 524.5" stroke="#fff"/>
<path d="M531.5 527.5L604.5 527.5" stroke="#fff"/>
<path d="M604.5 448.5L604.5 562.5" stroke="#fff"/>
<rect x="539" y="503" width="12" height="1" fill="#fff" stroke="none"/>
<rect x="539" y="507" width="12" height="1" fill="#fff" stroke="none"/>
<rect x="550.5" y="502.5" width="6" height="7" stroke="#fff" fill="#000"/>
<rect x="556" y="499" width="3" height="13" fill="#fff" stroke="none"/>
<rect x="557" y="501" width="1" height="1" fill="#000" stroke="none"/>
<rect x="557" y="509" width="1" height="1" fill="#000" stroke="none"/>
<rect x="559" y="503" width="21" height="5" fill="#fff" stroke="none"/>
<path d="M580 504.5L604 504.5" stroke="#fff"/>
<path d="M604.5 473.5L652.5 473.5" stroke="#fff"/>
<path d="M604.5 537.5L652.5 537.5" stroke="#fff"/>
<path d="M651.5 473.5L651.5 537.5" stroke="#fff"/>
<rect x="647" y="504" width="4" height="4" fill="#fff" stroke="none"/>
<rect x="678" y="504" width="4" height="4" fill="#fff" stroke="none"/>
<path d="M424 401.5L447 401.5" stroke="#fff"/>
<path d="M0 0H3V3H0V6H3" transform="translate(432.8 394.6) skewX(-18) scale(0.8 0.9)" vector-effect="non-scaling-stroke"/>
<path d="M0 0V3H3M3 0V6" transform="translate(436 394.6) skewX(-18) scale(0.8 0.9)" vector-effect="non-scaling-stroke"/>
<path d="M424.3 401.5L415.6 458" stroke="#fff"/>
<path d="M468.7 401.5L493 401.5" stroke="#fff"/>
<path d="M0 0H3V3H0V6H3" transform="translate(477.8 394.6) skewX(-18) scale(0.8 0.9)" vector-effect="non-scaling-stroke"/>
<path d="M3 0H0V3H3V6H0" transform="translate(481 394.6) skewX(-18) scale(0.8 0.9)" vector-effect="non-scaling-stroke"/>
<path d="M468.7 401.5L418 459.5" stroke="#fff"/>
<path d="M560.5 401.5L589 401.5" stroke="#fff"/>
<path d="M560.5 411.5L589 411.5" stroke="#fff"/>
<path d="M560.5 421.5L589 421.5" stroke="#fff"/>
<path d="M560.5 401.5L560.5 421.5" stroke="#fff"/>
<path d="M0 0H3V3H0V6H3" transform="translate(571 394.6) skewX(-18) scale(0.8 0.9)" vector-effect="non-scaling-stroke"/>
<path d="M3 0H0V3H3V6H0" transform="translate(574.2 394.6) skewX(-18) scale(0.8 0.9)" vector-effect="non-scaling-stroke"/>
<path d="M0 0H3V3H0V6H3" transform="translate(571 404.6) skewX(-18) scale(0.8 0.9)" vector-effect="non-scaling-stroke"/>
<path d="M3 0H0V6H3V3H0" transform="translate(574.2 404.6) skewX(-18) scale(0.8 0.9)" vector-effect="non-scaling-stroke"/>
<path d="M0 0H3V3H0V6H3" transform="translate(571 414.6) skewX(-18) scale(0.8 0.9)" vector-effect="non-scaling-stroke"/>
<path d="M0 0H3L1 6" transform="translate(574.2 414.6) skewX(-18) scale(0.8 0.9)" vector-effect="non-scaling-stroke"/>
<path d="M560.5 401.5L523.2 472.5" stroke="#fff"/>
<path d="M743.97 423.39L742.97 425.39" stroke="#fff"/>
<path d="M744.91 430.28L745.91 427.28" stroke="#fff"/>
<path d="M742.43 426.35L743.43 423.35" stroke="#fff"/>
<path d="M744.76 423.47L743.76 423" stroke="#fff"/>
<path d="M745.15 427.5L744.15 427.5" stroke="#fff"/>
<path d="M742.5 431L744.5 423" stroke="#fff"/>
<path d="M744.5 431L746 424" stroke="#fff"/>
<path d="M747.55 424.77L748.55 426.77" stroke="#fff"/>
<path d="M749.4 427.5L751.4 427.5" stroke="#fff"/>
<path d="M751.38 424.45L752.3 426.45" stroke="#fff"/>
<path d="M747.79 428.5L746.79 428.5" stroke="#fff"/>
<path d="M748.33 428.44L751.33 430.44" stroke="#fff"/>
<path d="M749.63 430.39L751.63 431" stroke="#fff"/>
<path d="M747.8 431L749.8 423" stroke="#fff"/>
<path d="M749.8 431L751.3 424" stroke="#fff"/>
<path d="M755.4 424.5L756.6 424.5" stroke="#fff"/>
<path d="M754.58 425.75L756.6 427.75" stroke="#fff"/>
<path d="M755.04 423.59L756.6 423" stroke="#fff"/>
<path d="M755.63 424.22L756.6 427.22" stroke="#fff"/>
<path d="M752.76 428.35L754.76 430.35" stroke="#fff"/>
<path d="M753.1 431L755.1 423" stroke="#fff"/>
<path d="M755.1 431L756.6 424" stroke="#fff"/>
<path d="M759.87 427.64L761.9 424.64" stroke="#fff"/>
<path d="M761.1 430.5L761.9 430.5" stroke="#fff"/>
<path d="M760.22 423.5L761.9 423.5" stroke="#fff"/>
<path d="M759.79 428.45L761.9 430.45" stroke="#fff"/>
<path d="M760.48 430.1L761.9 427.1" stroke="#fff"/>
<path d="M761.6 425.84L760.6 428.84" stroke="#fff"/>
<path d="M757.4 431L759.4 423" stroke="#fff"/>
<path d="M759.4 431L760.9 424" stroke="#fff"/>
<path d="M745.07 436.91L746 439.91" stroke="#fff"/>
<path d="M743.56 442.1L742.56 440.1" stroke="#fff"/>
<path d="M743.8 439.85L744.8 442.85" stroke="#fff"/>
<path d="M745.46 437.95L746 439.95" stroke="#fff"/>
<path d="M744.73 438.66L745.73 436.66" stroke="#fff"/>
<path d="M742.5 443L744.5 436" stroke="#fff"/>
<path d="M744.5 443L746 437" stroke="#fff"/>
<path d="M746.91 440.61L745.91 443" stroke="#fff"/>
<path d="M749.62 437.28L750.3 436" stroke="#fff"/>
<path d="M746.88 439.74L748.88 437.74" stroke="#fff"/>
<path d="M749.06 439.61L748.06 442.61" stroke="#fff"/>
<path d="M749.9 441.46L750.3 443" stroke="#fff"/>
<path d="M746.8 443L748.8 436" stroke="#fff"/>
<path d="M748.8 443L750.3 437" stroke="#fff"/>
<path d="M751.12 440.44L750.12 438.44" stroke="#fff"/>
<path d="M750.94 437.46L751.94 436" stroke="#fff"/>
<path d="M752.3 436.5L751.3 436.5" stroke="#fff"/>
<path d="M751.36 436.5L753.36 436.5" stroke="#fff"/>
<path d="M750.73 442.12L753.73 440.12" stroke="#fff"/>
<path d="M753.77 442.69L755.6 443" stroke="#fff"/>
<path d="M751.1 443L753.1 436" stroke="#fff"/>
<path d="M753.1 443L754.6 437" stroke="#fff"/>
<path d="M759.3 442.95L759.9 443" stroke="#fff"/>
<path d="M757.84 436.5L756.84 436.5" stroke="#fff"/>
<path d="M757.27 437.5L758.27 437.5" stroke="#fff"/>
<path d="M755.99 442.66L757.99 440.66" stroke="#fff"/>
<path d="M758.66 442.5L759.9 442.5" stroke="#fff"/>
<path d="M756.4 443L758.4 436" stroke="#fff"/>
<path d="M758.4 443L759.9 437" stroke="#fff"/>
<path d="M763.58 439.63L764.2 441.63" stroke="#fff"/>
<path d="M763.29 439.5L764.2 439.5" stroke="#fff"/>
<path d="M761.09 441.68L762.09 439.68" stroke="#fff"/>
<path d="M763.47 441.18L764.2 439.18" stroke="#fff"/>
<path d="M762.27 438.49L761.27 436" stroke="#fff"/>
<path d="M763.36 439.5L764.2 439.5" stroke="#fff"/>
<path d="M762.62 438.41L764.2 440.41" stroke="#fff"/>
<path d="M760.7 443L762.7 436" stroke="#fff"/>
<path d="M762.7 443L764.2 437" stroke="#fff"/>
<path d="M764.91 439.29L766.91 437.29" stroke="#fff"/>
<path d="M766.43 442.9L765.43 443" stroke="#fff"/>
<path d="M768.14 438.5L767.14 438.5" stroke="#fff"/>
<path d="M764.98 438.72L765.98 441.72" stroke="#fff"/>
<path d="M768.06 439.04L768.5 436.04" stroke="#fff"/>
<path d="M765 443L767 436" stroke="#fff"/>
<path d="M767 443L768.5 437" stroke="#fff"/>
<path d="M771.12 441.5L770.12 441.5" stroke="#fff"/>
<path d="M769.59 442.95L768.59 440.95" stroke="#fff"/>
<path d="M771.75 439.5L772.75 439.5" stroke="#fff"/>
<path d="M772.93 442.86L773.8 440.86" stroke="#fff"/>
<path d="M771.54 436.5L770.54 436.5" stroke="#fff"/>
<path d="M772.05 439.69L773.05 442.69" stroke="#fff"/>
<path d="M769.3 443L771.3 436" stroke="#fff"/>
<path d="M771.3 443L772.8 437" stroke="#fff"/>
<path d="M774.21 437.5L775.21 437.5" stroke="#fff"/>
<path d="M775.4 439.81L776.4 436.81" stroke="#fff"/>
<path d="M777.74 438.5L778.1 438.5" stroke="#fff"/>
<path d="M776.43 442.5L778.1 442.5" stroke="#fff"/>
<path d="M774.62 437.06L773.62 440.06" stroke="#fff"/>
<path d="M774.6 443L776.6 436" stroke="#fff"/>
<path d="M776.6 443L778.1 437" stroke="#fff"/>
<path d="M778.42 441.59L779.42 439.59" stroke="#fff"/>
<path d="M780.29 441.08L779.29 443" stroke="#fff"/>
<path d="M781.13 439.72L782.4 436.72" stroke="#fff"/>
<path d="M781.93 436.4L782.4 438.4" stroke="#fff"/>
<path d="M778.57 436.5L781.57 436.5" stroke="#fff"/>
<path d="M778.51 442.26L777.51 443" stroke="#fff"/>
<path d="M779.7 442.5L780.7 442.5" stroke="#fff"/>
<path d="M778.9 443L780.9 436" stroke="#fff"/>
<path d="M780.9 443L782.4 437" stroke="#fff"/>
<path d="M785.24 441.5L786.24 441.5" stroke="#fff"/>
<path d="M785.32 442.5L787.32 442.5" stroke="#fff"/>
<path d="M787.16 437.42L787.7 436" stroke="#fff"/>
<path d="M784.78 438.75L786.78 436" stroke="#fff"/>
<path d="M786.06 438.5L787.06 438.5" stroke="#fff"/>
<path d="M784.21 436.5L785.21 436.5" stroke="#fff"/>
<path d="M783.2 443L785.2 436" stroke="#fff"/>
<path d="M785.2 443L786.7 437" stroke="#fff"/>
<path d="M743.83 450.52L744.83 453.52" stroke="#fff"/>
<path d="M743.1 454.72L746.1 455" stroke="#fff"/>
<path d="M742.81 453.01L743.81 451.01" stroke="#fff"/>
<path d="M745.53 454.96L747 455" stroke="#fff"/>
<path d="M744.11 451.5L743.11 451.5" stroke="#fff"/>
<path d="M743.83 451.03L746.83 454.03" stroke="#fff"/>
<path d="M745.52 451.5L747 451.5" stroke="#fff"/>
<path d="M742.5 455L744.5 449" stroke="#fff"/>
<path d="M744.5 455L746 450" stroke="#fff"/>
<path d="M751.24 453.73L750.24 450.73" stroke="#fff"/>
<path d="M748.36 449.24L749.36 451.24" stroke="#fff"/>
<path d="M750.32 453.92L751.3 455" stroke="#fff"/>
<path d="M747.9 454.5L750.9 454.5" stroke="#fff"/>
<path d="M748.61 450.67L749.61 453.67" stroke="#fff"/>
<path d="M747.8 455L749.8 449" stroke="#fff"/>
<path d="M749.8 455L751.3 450" stroke="#fff"/>
<path d="M755.35 452.81L755.6 449.81" stroke="#fff"/>
<path d="M754.03 450.33L755.6 449" stroke="#fff"/>
<path d="M753.42 451.03L755.6 453.03" stroke="#fff"/>
<path d="M754.09 449.26L755.09 449" stroke="#fff"/>
<path d="M755.48 450.57L755.6 449" stroke="#fff"/>
<path d="M755.33 452.77L755.6 454.77" stroke="#fff"/>
<path d="M752.1 455L754.1 449" stroke="#fff"/>
<path d="M754.1 455L755.6 450" stroke="#fff"/>
<path d="M759.26 450.62L758.26 452.62" stroke="#fff"/>
<path d="M756.08 449.5L757.08 449.5" stroke="#fff"/>
<path d="M758.27 454.5L757.27 454.5" stroke="#fff"/>
<path d="M759.99 451.5L760.9 451.5" stroke="#fff"/>
<path d="M760.07 451.5L760.9 451.5" stroke="#fff"/>
<path d="M756.98 450.5L757.98 450.5" stroke="#fff"/>
<path d="M759.54 449.84L760.9 449" stroke="#fff"/>
<path d="M756.4 455L758.4 449" stroke="#fff"/>
<path d="M758.4 455L759.9 450" stroke="#fff"/>
<path d="M761.48 453.45L763.48 455" stroke="#fff"/>
<path d="M761.85 449.5L764.85 449.5" stroke="#fff"/>
<path d="M763.88 450.5L764.88 450.5" stroke="#fff"/>
<path d="M762.37 451.76L763.37 453.76" stroke="#fff"/>
<path d="M762.98 450.5L764.98 450.5" stroke="#fff"/>
<path d="M761.7 455L763.7 449" stroke="#fff"/>
<path d="M763.7 455L765.2 450" stroke="#fff"/>
<path d="M765.67 454.29L766.67 455" stroke="#fff"/>
<path d="M766.41 451.01L765.41 454.01" stroke="#fff"/>
<path d="M766.89 452.5L767.89 452.5" stroke="#fff"/>
<path d="M769.38 449.55L768.38 449" stroke="#fff"/>
<path d="M767.5 449.25L766.5 451.25" stroke="#fff"/>
<path d="M766 455L768 449" stroke="#fff"/>
<path d="M768 455L769.5 450" stroke="#fff"/>
<path d="M771.96 452.5L772.96 452.5" stroke="#fff"/>
<path d="M775.26 453.7L775.8 455" stroke="#fff"/>
<path d="M774.4 451.5L775.8 451.5" stroke="#fff"/>
<path d="M773.89 449.5L775.8 449.5" stroke="#fff"/>
<path d="M774.31 452.5L773.31 452.5" stroke="#fff"/>
<path d="M773.72 454.36L774.72 451.36" stroke="#fff"/>
<path d="M770.96 449.8L772.96 449" stroke="#fff"/>
<path d="M771.3 455L773.3 449" stroke="#fff"/>
<path d="M773.3 455L774.8 450" stroke="#fff"/>
<path d="M778.89 452.77L779.89 455" stroke="#fff"/>
<path d="M777.42 451.5L776.42 451.5" stroke="#fff"/>
<path d="M780.76 454.5L779.76 454.5" stroke="#fff"/>
<path d="M778.73 453.47L781.1 455" stroke="#fff"/>
<path d="M780.15 454.5L781.1 454.5" stroke="#fff"/>
<path d="M779.88 450.38L781.1 453.38" stroke="#fff"/>
<path d="M776.6 455L778.6 449" stroke="#fff"/>
<path d="M778.6 455L780.1 450" stroke="#fff"/>
<path d="M783.8 453.5L782.8 453.5" stroke="#fff"/>
<path d="M784.56 450.19L785.56 452.19" stroke="#fff"/>
<path d="M782.67 453.5L784.67 453.5" stroke="#fff"/>
<path d="M784.24 449.07L783.24 452.07" stroke="#fff"/>
<path d="M782.74 453.5L783.74 453.5" stroke="#fff"/>
<path d="M781.9 455L783.9 449" stroke="#fff"/>
<path d="M783.9 455L785.4 450" stroke="#fff"/>
<path d="M0 0H3L1 6" transform="translate(784 450.1) skewX(-18) scale(0.8 0.9)" vector-effect="non-scaling-stroke"/>
<path d="M3 0H0V3H3V6H0" transform="translate(787.2 450.1) skewX(-18) scale(0.8 0.9)" vector-effect="non-scaling-stroke"/>
<path d="M794.54 452.14L796 455" stroke="#fff"/>
<path d="M794.84 454.97L795.84 455" stroke="#fff"/>
<path d="M795.89 454.75L794.89 455" stroke="#fff"/>
<path d="M793.29 454.28L796 455" stroke="#fff"/>
<path d="M792.93 454.67L793.93 451.67" stroke="#fff"/>
<path d="M793.91 451.57L795.91 453.57" stroke="#fff"/>
<path d="M791.5 455L793.5 451" stroke="#fff"/>
<path d="M793.5 455L795 452" stroke="#fff"/>
<path d="M745.28 464.5L744.28 464.5" stroke="#fff"/>
<path d="M743.46 463.99L746 466.99" stroke="#fff"/>
<path d="M742.1 461.5L745.1 461.5" stroke="#fff"/>
<path d="M743.8 462.81L744.8 465.81" stroke="#fff"/>
<path d="M743.38 462.9L745.38 461" stroke="#fff"/>
<path d="M743.3 463.03L746 461" stroke="#fff"/>
<path d="M745.76 462.5L744.76 462.5" stroke="#fff"/>
<path d="M742.5 467L744.5 461" stroke="#fff"/>
<path d="M744.5 467L746 462" stroke="#fff"/>
<path d="M748.16 463.36L747.16 465.36" stroke="#fff"/>
<path d="M750.93 465.53L749.93 467" stroke="#fff"/>
<path d="M746.81 466.5L748.81 466.5" stroke="#fff"/>
<path d="M750.98 462.5L751.3 465.5" stroke="#fff"/>
<path d="M748.85 462.14L750.85 465.14" stroke="#fff"/>
<path d="M750.72 465.5L751.3 465.5" stroke="#fff"/>
<path d="M746.8 467L748.8 461" stroke="#fff"/>
<path d="M748.8 467L750.3 462" stroke="#fff"/>
<path d="M755.2 461.3L756.6 464.3" stroke="#fff"/>
<path d="M754.67 461.83L756.6 464.83" stroke="#fff"/>
<path d="M751.84 466.56L752.84 464.56" stroke="#fff"/>
<path d="M753.96 463.06L755.96 465.06" stroke="#fff"/>
<path d="M755.3 466.86L756.6 467" stroke="#fff"/>
<path d="M752.1 467L754.1 461" stroke="#fff"/>
<path d="M754.1 467L755.6 462" stroke="#fff"/>
<path d="M758.4 464.34L761.4 461.34" stroke="#fff"/>
<path d="M757.74 461.5L758.74 461.5" stroke="#fff"/>
<path d="M761.43 463.98L761.9 466.98" stroke="#fff"/>
<path d="M761.43 466.98L761.9 467" stroke="#fff"/>
<path d="M757.6 462.15L756.6 461" stroke="#fff"/>
<path d="M757.4 467L759.4 461" stroke="#fff"/>
<path d="M759.4 467L760.9 462" stroke="#fff"/>
<path d="M762.66 462.5L764.66 462.5" stroke="#fff"/>
<path d="M763.21 461.12L766.21 464.12" stroke="#fff"/>
<path d="M764.27 464.15L767.2 466.15" stroke="#fff"/>
<path d="M763.89 461.5L765.89 461.5" stroke="#fff"/>
<path d="M767.04 461.76L767.2 461" stroke="#fff"/>
<path d="M763.56 462.5L766.56 462.5" stroke="#fff"/>
<path d="M764.43 466.72L763.43 464.72" stroke="#fff"/>
<path d="M762.7 467L764.7 461" stroke="#fff"/>
<path d="M764.7 467L766.2 462" stroke="#fff"/>
<path d="M770.34 466.5L771.5 466.5" stroke="#fff"/>
<path d="M769.46 461.44L771.5 464.44" stroke="#fff"/>
<path d="M768.49 461.65L769.49 461" stroke="#fff"/>
<path d="M769.59 465.09L771.5 462.09" stroke="#fff"/>
<path d="M769.71 461.24L770.71 461" stroke="#fff"/>
<path d="M769.78 461.23L771.5 461" stroke="#fff"/>
<path d="M768 467L770 461" stroke="#fff"/>
<path d="M770 467L771.5 462" stroke="#fff"/>
<path d="M774.44 463.62L773.44 461" stroke="#fff"/>
<path d="M772.15 464.15L773.15 467" stroke="#fff"/>
<path d="M773.1 465.74L772.1 462.74" stroke="#fff"/>
<path d="M774.49 466.98L776.49 467" stroke="#fff"/>
<path d="M775.02 466.5L776.8 466.5" stroke="#fff"/>
<path d="M772.97 462.5L775.97 462.5" stroke="#fff"/>
<path d="M772.3 467L774.3 461" stroke="#fff"/>
<path d="M774.3 467L775.8 462" stroke="#fff"/>
<path d="M886 488.5L994 488.5" stroke="#fff"/>
<path d="M886 495.5L994 495.5" stroke="#fff"/>
<path d="M886 501.5L994 501.5" stroke="#fff"/>
<path d="M886 508.5L994 508.5" stroke="#fff"/>
<path d="M886 515.5L994 515.5" stroke="#fff"/>
<path d="M886 522.5L994 522.5" stroke="#fff"/>
<path d="M886 528.5L994 528.5" stroke="#fff"/>
<path d="M886 535.5L994 535.5" stroke="#fff"/>
<path d="M886 542.5L994 542.5" stroke="#fff"/>
<path d="M886 548.5L994 548.5" stroke="#fff"/>
<path d="M886 555.5L994 555.5" stroke="#fff"/>
<path d="M886 562.5L994 562.5" stroke="#fff"/>
<path d="M886 568.5L994 568.5" stroke="#fff"/>
<path d="M886 575.5L994 575.5" stroke="#fff"/>
<path d="M886 582.5L994 582.5" stroke="#fff"/>
<path d="M886 588.5L994 588.5" stroke="#fff"/>
<path d="M886 595.5L994 595.5" stroke="#fff"/>
<path d="M886 602.5L994 602.5" stroke="#fff"/>
<path d="M886 609.5L994 609.5" stroke="#fff"/>
<path d="M886 615.5L994 615.5" stroke="#fff"/>
<path d="M886 622.5L994 622.5" stroke="#fff"/>
<path d="M886 629.5L994 629.5" stroke="#fff"/>
<path d="M886 635.5L994 635.5" stroke="#fff"/>
<path d="M886 642.5L994 642.5" stroke="#fff"/>
<path d="M886 649.5L994 649.5" stroke="#fff"/>
<path d="M886 656.5L994 656.5" stroke="#fff"/>
<path d="M886 662.5L994 662.5" stroke="#fff"/>
<path d="M886 669.5L994 669.5" stroke="#fff"/>
<path d="M886 676.5L994 676.5" stroke="#fff"/>
<path d="M886 682.5L994 682.5" stroke="#fff"/>
<path d="M886 689.5L994 689.5" stroke="#fff"/>
<path d="M886.5 488L886.5 696" stroke="#fff"/>
<path d="M898.5 488L898.5 696" stroke="#fff"/>
<path d="M927.5 488L927.5 696" stroke="#fff"/>
<path d="M940.5 488L940.5 696" stroke="#fff"/>
<path d="M969.5 488L969.5 696" stroke="#fff"/>
<rect x="890" y="490" width="5" height="5" fill="#fff" stroke="none"/>
<rect x="889" y="490" width="1" height="1" fill="#fff" stroke="none"/>
<rect x="900" y="489" width="15" height="6" fill="#fff" stroke="none"/>
<rect x="933" y="490" width="3" height="5" fill="#fff" stroke="none"/>
<rect x="947" y="490" width="14" height="5" fill="#fff" stroke="none"/>
<rect x="970" y="490" width="22" height="5" fill="#fff" stroke="none"/>
<rect x="890" y="497" width="5" height="4" fill="#fff" stroke="none"/>
<rect x="889" y="497" width="1" height="1" fill="#fff" stroke="none"/>
<rect x="900" y="497" width="24" height="3" fill="#fff" stroke="none"/>
<rect x="933" y="497" width="3" height="4" fill="#fff" stroke="none"/>
<rect x="948" y="497" width="10" height="4" fill="#fff" stroke="none"/>
<rect x="970" y="497" width="24" height="4" fill="#fff" stroke="none"/>
<rect x="970" y="499" width="23" height="1" fill="#000" stroke="none"/>
<rect x="890" y="503" width="5" height="5" fill="#fff" stroke="none"/>
<rect x="889" y="503" width="1" height="1" fill="#fff" stroke="none"/>
<rect x="900" y="503" width="19" height="5" fill="#fff" stroke="none"/>
<rect x="933" y="503" width="3" height="5" fill="#fff" stroke="none"/>
<rect x="947" y="503" width="14" height="5" fill="#fff" stroke="none"/>
<rect x="970" y="503" width="24" height="5" fill="#fff" stroke="none"/>
<rect x="970" y="505" width="23" height="1" fill="#000" stroke="none"/>
<rect x="890" y="510" width="5" height="5" fill="#fff" stroke="none"/>
<rect x="889" y="510" width="1" height="1" fill="#fff" stroke="none"/>
<rect x="900" y="509" width="25" height="6" fill="#fff" stroke="none"/>
<rect x="933" y="510" width="3" height="5" fill="#fff" stroke="none"/>
<rect x="947" y="510" width="10" height="5" fill="#fff" stroke="none"/>
<rect x="970" y="510" width="22" height="5" fill="#fff" stroke="none"/>
<rect x="890" y="517" width="5" height="5" fill="#fff" stroke="none"/>
<rect x="889" y="517" width="1" height="1" fill="#fff" stroke="none"/>
<rect x="900" y="517" width="24" height="5" fill="#fff" stroke="none"/>
<rect x="933" y="517" width="3" height="5" fill="#fff" stroke="none"/>
<rect x="947" y="517" width="14" height="5" fill="#fff" stroke="none"/>
<rect x="970" y="518" width="24" height="4" fill="#fff" stroke="none"/>
<rect x="890" y="524" width="5" height="4" fill="#fff" stroke="none"/>
<rect x="889" y="524" width="1" height="1" fill="#fff" stroke="none"/>
<rect x="900" y="524" width="14" height="3" fill="#fff" stroke="none"/>
<rect x="933" y="524" width="3" height="4" fill="#fff" stroke="none"/>
<rect x="946" y="524" width="14" height="4" fill="#fff" stroke="none"/>
<rect x="970" y="525" width="21" height="2" fill="#fff" stroke="none"/>
<rect x="890" y="530" width="5" height="5" fill="#fff" stroke="none"/>
<rect x="889" y="530" width="1" height="1" fill="#fff" stroke="none"/>
<rect x="900" y="529" width="23" height="6" fill="#fff" stroke="none"/>
<rect x="933" y="530" width="3" height="5" fill="#fff" stroke="none"/>
<rect x="948" y="530" width="10" height="5" fill="#fff" stroke="none"/>
<rect x="970" y="530" width="22" height="5" fill="#fff" stroke="none"/>
<rect x="890" y="537" width="5" height="5" fill="#fff" stroke="none"/>
<rect x="889" y="537" width="1" height="1" fill="#fff" stroke="none"/>
<rect x="900" y="537" width="21" height="5" fill="#fff" stroke="none"/>
<rect x="933" y="537" width="3" height="5" fill="#fff" stroke="none"/>
<rect x="948" y="537" width="14" height="5" fill="#fff" stroke="none"/>
<rect x="890" y="544" width="5" height="4" fill="#fff" stroke="none"/>
<rect x="889" y="544" width="1" height="1" fill="#fff" stroke="none"/>
<rect x="900" y="544" width="16" height="4" fill="#fff" stroke="none"/>
<rect x="933" y="544" width="3" height="4" fill="#fff" stroke="none"/>
<rect x="947" y="544" width="10" height="4" fill="#fff" stroke="none"/>
<rect x="970" y="544" width="24" height="4" fill="#fff" stroke="none"/>
<rect x="970" y="546" width="23" height="1" fill="#000" stroke="none"/>
<rect x="890" y="550" width="5" height="5" fill="#fff" stroke="none"/>
<rect x="889" y="550" width="1" height="1" fill="#fff" stroke="none"/>
<rect x="900" y="549" width="16" height="5" fill="#fff" stroke="none"/>
<rect x="933" y="550" width="3" height="5" fill="#fff" stroke="none"/>
<rect x="947" y="550" width="10" height="5" fill="#fff" stroke="none"/>
<rect x="970" y="550" width="22" height="5" fill="#fff" stroke="none"/>
<rect x="890" y="557" width="5" height="5" fill="#fff" stroke="none"/>
<rect x="889" y="557" width="1" height="1" fill="#fff" stroke="none"/>
<rect x="900" y="557" width="9" height="5" fill="#fff" stroke="none"/>
<rect x="933" y="557" width="3" height="5" fill="#fff" stroke="none"/>
<rect x="946" y="557" width="10" height="5" fill="#fff" stroke="none"/>
<rect x="890" y="564" width="5" height="4" fill="#fff" stroke="none"/>
<rect x="889" y="564" width="1" height="1" fill="#fff" stroke="none"/>
<rect x="900" y="564" width="19" height="4" fill="#fff" stroke="none"/>
<rect x="933" y="564" width="3" height="4" fill="#fff" stroke="none"/>
<rect x="970" y="564" width="22" height="4" fill="#fff" stroke="none"/>
<rect x="890" y="570" width="5" height="5" fill="#fff" stroke="none"/>
<rect x="889" y="570" width="1" height="1" fill="#fff" stroke="none"/>
<rect x="900" y="569" width="23" height="6" fill="#fff" stroke="none"/>
<rect x="933" y="570" width="3" height="5" fill="#fff" stroke="none"/>
<rect x="970" y="570" width="22" height="5" fill="#fff" stroke="none"/>
<rect x="890" y="577" width="5" height="5" fill="#fff" stroke="none"/>
<rect x="889" y="577" width="1" height="1" fill="#fff" stroke="none"/>
<rect x="900" y="577" width="27" height="4" fill="#fff" stroke="none"/>
<rect x="933" y="577" width="3" height="5" fill="#fff" stroke="none"/>
<rect x="949" y="577" width="12" height="5" fill="#fff" stroke="none"/>
<rect x="890" y="584" width="5" height="4" fill="#fff" stroke="none"/>
<rect x="889" y="584" width="1" height="1" fill="#fff" stroke="none"/>
<rect x="900" y="584" width="21" height="4" fill="#fff" stroke="none"/>
<rect x="933" y="584" width="3" height="4" fill="#fff" stroke="none"/>
<rect x="970" y="585" width="21" height="2" fill="#fff" stroke="none"/>
<rect x="890" y="590" width="5" height="5" fill="#fff" stroke="none"/>
<rect x="889" y="590" width="1" height="1" fill="#fff" stroke="none"/>
<rect x="900" y="589" width="18" height="6" fill="#fff" stroke="none"/>
<rect x="933" y="590" width="3" height="5" fill="#fff" stroke="none"/>
<rect x="948" y="590" width="10" height="5" fill="#fff" stroke="none"/>
<rect x="890" y="597" width="5" height="5" fill="#fff" stroke="none"/>
<rect x="889" y="597" width="1" height="1" fill="#fff" stroke="none"/>
<rect x="900" y="597" width="20" height="5" fill="#fff" stroke="none"/>
<rect x="933" y="597" width="3" height="5" fill="#fff" stroke="none"/>
<rect x="970" y="597" width="22" height="5" fill="#fff" stroke="none"/>
<rect x="890" y="604" width="5" height="5" fill="#fff" stroke="none"/>
<rect x="889" y="604" width="1" height="1" fill="#fff" stroke="none"/>
<rect x="900" y="604" width="19" height="4" fill="#fff" stroke="none"/>
<rect x="933" y="604" width="3" height="5" fill="#fff" stroke="none"/>
<rect x="948" y="604" width="12" height="5" fill="#fff" stroke="none"/>
<rect x="890" y="611" width="5" height="4" fill="#fff" stroke="none"/>
<rect x="889" y="611" width="1" height="1" fill="#fff" stroke="none"/>
<rect x="900" y="610" width="25" height="5" fill="#fff" stroke="none"/>
<rect x="933" y="611" width="3" height="4" fill="#fff" stroke="none"/>
<rect x="948" y="611" width="14" height="4" fill="#fff" stroke="none"/>
<rect x="970" y="613" width="24" height="2" fill="#fff" stroke="none"/>
<rect x="890" y="617" width="5" height="5" fill="#fff" stroke="none"/>
<rect x="889" y="617" width="1" height="1" fill="#fff" stroke="none"/>
<rect x="900" y="617" width="9" height="5" fill="#fff" stroke="none"/>
<rect x="933" y="617" width="3" height="5" fill="#fff" stroke="none"/>
<rect x="890" y="624" width="5" height="5" fill="#fff" stroke="none"/>
<rect x="889" y="624" width="1" height="1" fill="#fff" stroke="none"/>
<rect x="900" y="624" width="18" height="5" fill="#fff" stroke="none"/>
<rect x="933" y="624" width="3" height="5" fill="#fff" stroke="none"/>
<rect x="945" y="624" width="12" height="5" fill="#fff" stroke="none"/>
<rect x="890" y="631" width="5" height="4" fill="#fff" stroke="none"/>
<rect x="889" y="631" width="1" height="1" fill="#fff" stroke="none"/>
<rect x="900" y="630" width="9" height="4" fill="#fff" stroke="none"/>
<rect x="933" y="631" width="3" height="4" fill="#fff" stroke="none"/>
<rect x="945" y="631" width="9" height="4" fill="#fff" stroke="none"/>
<rect x="890" y="637" width="5" height="5" fill="#fff" stroke="none"/>
<rect x="889" y="637" width="1" height="1" fill="#fff" stroke="none"/>
<rect x="900" y="637" width="18" height="5" fill="#fff" stroke="none"/>
<rect x="933" y="637" width="3" height="5" fill="#fff" stroke="none"/>
<rect x="945" y="637" width="12" height="5" fill="#fff" stroke="none"/>
<rect x="890" y="644" width="5" height="5" fill="#fff" stroke="none"/>
<rect x="889" y="644" width="1" height="1" fill="#fff" stroke="none"/>
<rect x="900" y="644" width="23" height="5" fill="#fff" stroke="none"/>
<rect x="933" y="644" width="3" height="5" fill="#fff" stroke="none"/>
<rect x="945" y="644" width="10" height="5" fill="#fff" stroke="none"/>
<rect x="970" y="643" width="24" height="1" fill="#fff" stroke="none"/>
<rect x="890" y="651" width="5" height="5" fill="#fff" stroke="none"/>
<rect x="889" y="651" width="1" height="1" fill="#fff" stroke="none"/>
<rect x="900" y="650" width="13" height="6" fill="#fff" stroke="none"/>
<rect x="933" y="651" width="3" height="5" fill="#fff" stroke="none"/>
<rect x="945" y="651" width="15" height="5" fill="#fff" stroke="none"/>
<rect x="970" y="651" width="22" height="5" fill="#fff" stroke="none"/>
<rect x="890" y="658" width="5" height="4" fill="#fff" stroke="none"/>
<rect x="889" y="658" width="1" height="1" fill="#fff" stroke="none"/>
<rect x="900" y="658" width="13" height="3" fill="#fff" stroke="none"/>
<rect x="933" y="658" width="3" height="4" fill="#fff" stroke="none"/>
<rect x="945" y="658" width="10" height="4" fill="#fff" stroke="none"/>
<rect x="970" y="659" width="21" height="2" fill="#fff" stroke="none"/>
<rect x="890" y="664" width="5" height="5" fill="#fff" stroke="none"/>
<rect x="889" y="664" width="1" height="1" fill="#fff" stroke="none"/>
<rect x="900" y="664" width="21" height="5" fill="#fff" stroke="none"/>
<rect x="933" y="664" width="3" height="5" fill="#fff" stroke="none"/>
<rect x="945" y="664" width="14" height="5" fill="#fff" stroke="none"/>
<rect x="970" y="663" width="24" height="3" fill="#fff" stroke="none"/>
<rect x="890" y="671" width="5" height="5" fill="#fff" stroke="none"/>
<rect x="889" y="671" width="1" height="1" fill="#fff" stroke="none"/>
<rect x="900" y="670" width="10" height="6" fill="#fff" stroke="none"/>
<rect x="933" y="671" width="3" height="5" fill="#fff" stroke="none"/>
<rect x="970" y="671" width="22" height="5" fill="#fff" stroke="none"/>
<rect x="890" y="678" width="5" height="4" fill="#fff" stroke="none"/>
<rect x="889" y="678" width="1" height="1" fill="#fff" stroke="none"/>
<rect x="900" y="678" width="10" height="4" fill="#fff" stroke="none"/>
<rect x="933" y="678" width="3" height="4" fill="#fff" stroke="none"/>
<rect x="946" y="678" width="17" height="4" fill="#fff" stroke="none"/>
<rect x="890" y="684" width="5" height="5" fill="#fff" stroke="none"/>
<rect x="889" y="684" width="1" height="1" fill="#fff" stroke="none"/>
<rect x="900" y="684" width="24" height="4" fill="#fff" stroke="none"/>
<rect x="933" y="684" width="3" height="5" fill="#fff" stroke="none"/>
<rect x="948" y="684" width="12" height="5" fill="#fff" stroke="none"/>
<path d="M886 696.5L994 696.5" stroke="#fff"/>
<rect x="887" y="691" width="10" height="5" fill="#fff" stroke="none"/>
<rect x="907" y="691" width="10" height="5" fill="#fff" stroke="none"/>
<rect x="929" y="691" width="9" height="5" fill="#fff" stroke="none"/>
<rect x="951" y="691" width="9" height="5" fill="#fff" stroke="none"/>
<rect x="977" y="691" width="9" height="5" fill="#fff" stroke="none"/>
<path d="M886.5 488L886.5 721" stroke="#fff"/>
<path d="M886 708.5L994 708.5" stroke="#fff"/>
<path d="M940.5 696L940.5 721" stroke="#fff"/>
<rect x="941" y="696" width="9" height="11" fill="#fff" stroke="none"/>
<path d="M950.5 696L950.5 708" stroke="#fff"/>
<path d="M952.5 696L952.5 708" stroke="#fff"/>
<path d="M969.5 696L969.5 708" stroke="#fff"/>
<path d="M952 701.5L994 701.5" stroke="#fff"/>
<rect x="956" y="697" width="7" height="4" fill="#fff" stroke="none"/>
<rect x="959" y="703" width="3" height="5" fill="#fff" stroke="none"/>
<path d="M886 715.5L940 715.5" stroke="#fff"/>
<path d="M898.5 708L898.5 721" stroke="#fff"/>
<path d="M919.5 708L919.5 721" stroke="#fff"/>
<rect x="887" y="709" width="10" height="6" fill="#fff" stroke="none"/>
<rect x="901" y="709" width="14" height="5" fill="#fff" stroke="none"/>
<rect x="921" y="709" width="15" height="5" fill="#fff" stroke="none"/>
<rect x="887" y="716" width="9" height="5" fill="#fff" stroke="none"/>
<path d="M892 700.5L897 700.5" stroke="#fff"/>
<path d="M894.5 698L894.5 705" stroke="#fff"/>
<path d="M892 703.5L897 703.5" stroke="#fff"/>
<path d="M893 705L894.5 701" stroke="#fff"/>
<path d="M894.5 701L897 705" stroke="#fff"/>
<path d="M896.5 699L896.5 705" stroke="#fff"/>
<path d="M898 700.5L903 700.5" stroke="#fff"/>
<path d="M900.5 698L900.5 705" stroke="#fff"/>
<path d="M898 703.5L903 703.5" stroke="#fff"/>
<path d="M899 705L900.5 701" stroke="#fff"/>
<path d="M900.5 701L903 705" stroke="#fff"/>
<path d="M899.5 698L899.5 705" stroke="#fff"/>
<path d="M904 700.5L909 700.5" stroke="#fff"/>
<path d="M906.5 698L906.5 705" stroke="#fff"/>
<path d="M904 703.5L909 703.5" stroke="#fff"/>
<path d="M905 705L906.5 701" stroke="#fff"/>
<path d="M906.5 701L909 705" stroke="#fff"/>
<path d="M908.5 699L908.5 705" stroke="#fff"/>
<path d="M910 700.5L915 700.5" stroke="#fff"/>
<path d="M912.5 698L912.5 705" stroke="#fff"/>
<path d="M910 703.5L915 703.5" stroke="#fff"/>
<path d="M911 705L912.5 701" stroke="#fff"/>
<path d="M912.5 701L915 705" stroke="#fff"/>
<path d="M911.5 698L911.5 705" stroke="#fff"/>
<path d="M916 700.5L921 700.5" stroke="#fff"/>
<path d="M918.5 698L918.5 705" stroke="#fff"/>
<path d="M916 703.5L921 703.5" stroke="#fff"/>
<path d="M917 705L918.5 701" stroke="#fff"/>
<path d="M918.5 701L921 705" stroke="#fff"/>
<path d="M920.5 699L920.5 705" stroke="#fff"/>
<path d="M922 700.5L927 700.5" stroke="#fff"/>
<path d="M924.5 698L924.5 705" stroke="#fff"/>
<path d="M922 703.5L927 703.5" stroke="#fff"/>
<path d="M923 705L924.5 701" stroke="#fff"/>
<path d="M924.5 701L927 705" stroke="#fff"/>
<path d="M923.5 698L923.5 705" stroke="#fff"/>
<path d="M928 700.5L933 700.5" stroke="#fff"/>
<path d="M930.5 698L930.5 705" stroke="#fff"/>
<path d="M928 703.5L933 703.5" stroke="#fff"/>
<path d="M929 705L930.5 701" stroke="#fff"/>
<path d="M930.5 701L933 705" stroke="#fff"/>
<path d="M932.5 699L932.5 705" stroke="#fff"/>
<path d="M944 713.5L949 713.5" stroke="#fff"/>
<path d="M946.5 711L946.5 718" stroke="#fff"/>
<path d="M944 716.5L949 716.5" stroke="#fff"/>
<path d="M945 718L946.5 714" stroke="#fff"/>
<path d="M946.5 714L949 718" stroke="#fff"/>
<path d="M948.5 712L948.5 718" stroke="#fff"/>
<path d="M950 713.5L955 713.5" stroke="#fff"/>
<path d="M952.5 711L952.5 718" stroke="#fff"/>
<path d="M950 716.5L955 716.5" stroke="#fff"/>
<path d="M951 718L952.5 714" stroke="#fff"/>
<path d="M952.5 714L955 718" stroke="#fff"/>
<path d="M951.5 711L951.5 718" stroke="#fff"/>
<path d="M956 713.5L961 713.5" stroke="#fff"/>
<path d="M958.5 711L958.5 718" stroke="#fff"/>
<path d="M956 716.5L961 716.5" stroke="#fff"/>
<path d="M957 718L958.5 714" stroke="#fff"/>
<path d="M958.5 714L961 718" stroke="#fff"/>
<path d="M960.5 712L960.5 718" stroke="#fff"/>
<path d="M962 713.5L967 713.5" stroke="#fff"/>
<path d="M964.5 711L964.5 718" stroke="#fff"/>
<path d="M962 716.5L967 716.5" stroke="#fff"/>
<path d="M963 718L964.5 714" stroke="#fff"/>
<path d="M964.5 714L967 718" stroke="#fff"/>
<path d="M963.5 711L963.5 718" stroke="#fff"/>
<path d="M968 713.5L973 713.5" stroke="#fff"/>
<path d="M970.5 711L970.5 718" stroke="#fff"/>
<path d="M968 716.5L973 716.5" stroke="#fff"/>
<path d="M969 718L970.5 714" stroke="#fff"/>
<path d="M970.5 714L973 718" stroke="#fff"/>
<path d="M972.5 712L972.5 718" stroke="#fff"/>
<path d="M974 713.5L979 713.5" stroke="#fff"/>
<path d="M976.5 711L976.5 718" stroke="#fff"/>
<path d="M974 716.5L979 716.5" stroke="#fff"/>
<path d="M975 718L976.5 714" stroke="#fff"/>
<path d="M976.5 714L979 718" stroke="#fff"/>
<path d="M975.5 711L975.5 718" stroke="#fff"/>
<path d="M980 713.5L985 713.5" stroke="#fff"/>
<path d="M982.5 711L982.5 718" stroke="#fff"/>
<path d="M980 716.5L985 716.5" stroke="#fff"/>
<path d="M981 718L982.5 714" stroke="#fff"/>
<path d="M982.5 714L985 718" stroke="#fff"/>
<path d="M984.5 712L984.5 718" stroke="#fff"/>
<path d="M986 713.5L991 713.5" stroke="#fff"/>
<path d="M988.5 711L988.5 718" stroke="#fff"/>
<path d="M986 716.5L991 716.5" stroke="#fff"/>
<path d="M987 718L988.5 714" stroke="#fff"/>
<path d="M988.5 714L991 718" stroke="#fff"/>
<path d="M987.5 711L987.5 718" stroke="#fff"/>
<path d="M54 216.5L203 216.5" stroke="#ff0000" stroke-dasharray="28 4 6 4" stroke-dashoffset="5"/>
<path d="M175 216.5L229 216.5" stroke="#ff0000"/>
<path d="M233 216.5L695.5 216.5" stroke="#ff0000" stroke-dasharray="28 4 6 4" stroke-dashoffset="32"/>
<path d="M219.5 252L219.5 283" stroke="#ff0000"/>
<path d="M305.5 252L305.5 283" stroke="#ff0000"/>
<path d="M262.5 124L262.5 171" stroke="#ff0000"/>
<path d="M371 196.5L379 196.5" stroke="#ff0000"/>
<path d="M402 196.5L414 196.5" stroke="#ff0000"/>
<path d="M374 236.5L404 236.5" stroke="#ff0000"/>
<path d="M408 236.5L414 236.5" stroke="#ff0000"/>
<path d="M409.5 196.5L453.5 196.5" stroke="#ff0000" stroke-dasharray="12 3"/>
<path d="M409.5 236.5L453.5 236.5" stroke="#ff0000" stroke-dasharray="12 3"/>
<path d="M483 196.5L519 196.5" stroke="#ff0000" stroke-dasharray="12 3"/>
<path d="M483 236.5L519 236.5" stroke="#ff0000" stroke-dasharray="12 3"/>
<path d="M447 101.5L465 101.5" stroke="#ff0000"/>
<path d="M472 101.5L490 101.5" stroke="#ff0000"/>
<path d="M468.5 85L468.5 100" stroke="#ff0000"/>
<path d="M468.5 107L468.5 114" stroke="#ff0000"/>
<path d="M468.5 118L468.5 136" stroke="#ff0000"/>
<path d="M500.5 92L500.5 119" stroke="#ff0000"/>
<path d="M500.5 126L500.5 162" stroke="#ff0000"/>
<path d="M500.5 128L500.5 147" stroke="#ff0000"/>
<path d="M453 216.5L482 216.5" stroke="#ff0000" stroke-dasharray="10 4 3 4"/>
<path d="M665.5 242L665.5 279" stroke="#ff0000"/>
<path d="M699.5 242L699.5 279" stroke="#ff0000"/>
<path d="M419.5 272L419.5 294" stroke="#ff0000"/>
<path d="M518.5 272L518.5 294" stroke="#ff0000"/>
<path d="M854 101.5L896 101.5" stroke="#ff0000" stroke-dasharray="16 3 4 3"/>
<path d="M875.5 77L875.5 340" stroke="#ff0000" stroke-dasharray="30 4 6 4"/>
<path d="M832.5 131.5H770.5Q763.5 132 763.5 138.5V313" stroke="#ff0000" stroke-dasharray="40 3 5 3"/>
<circle cx="875.5" cy="216.8" r="19.8" stroke="#ff0000" fill="none" stroke-dasharray="22 3 4 3"/>
<path d="M835 216.5L915 216.5" stroke="#ff0000" stroke-dasharray="14 3 22 3 22 3"/>
<path d="M867 299.5L872 299.5" stroke="#ff0000"/>
<path d="M879 299.5L884 299.5" stroke="#ff0000"/>
<path d="M830.5 283L830.5 308" stroke="#ff0000" stroke-dasharray="6 2"/>
<path d="M849.5 271L849.5 295" stroke="#ff0000" stroke-dasharray="9 2"/>
<path d="M900.5 271L900.5 297" stroke="#ff0000"/>
<path d="M919.5 283L919.5 308" stroke="#ff0000"/>
<path d="M60.5 505.5L426 505.5" stroke="#ff0000" stroke-dasharray="28 4 6 4" stroke-dashoffset="3"/>
<path d="M226 505.5L297.5 505.5" stroke="#ff0000"/>
<path d="M429 505.5L454.6 505.5" stroke="#ff0000"/>
<path d="M482 505.5L508.8 505.5" stroke="#ff0000"/>
<path d="M511 505.5L718 505.5" stroke="#ff0000" stroke-dasharray="28 4 6 4" stroke-dashoffset="33.5"/>
<path d="M371 485.5L405 485.5" stroke="#ff0000"/>
<path d="M374 525.5L404 525.5" stroke="#ff0000"/>
<path d="M393.6 460.5L428.6 460.5" stroke="#ff0000"/>
<path d="M414.5 436L414.5 478" stroke="#ff0000"/>
<circle cx="414.6" cy="460.6" r="3.8" stroke="#fff" fill="none"/>
<path d="M393.6 550.5L428.6 550.5" stroke="#ff0000"/>
<path d="M414.5 532L414.5 574" stroke="#ff0000"/>
<circle cx="414.6" cy="550.2" r="3.8" stroke="#fff" fill="none"/>
<path d="M411.5 479.5L427.5 479.5" stroke="#ff0000"/>
<path d="M419.5 473L419.5 487" stroke="#ff0000"/>
<circle cx="419.5" cy="479.4" r="2.4" stroke="#fff" fill="none"/>
<path d="M411.5 531.5L427.5 531.5" stroke="#ff0000"/>
<path d="M419.5 523L419.5 539" stroke="#ff0000"/>
<circle cx="419.5" cy="531.3" r="2.4" stroke="#fff" fill="none"/>
<circle cx="419.5" cy="479.4" r="1" stroke="#fff" fill="#fff"/>
<circle cx="419.5" cy="531.3" r="1" stroke="#fff" fill="#fff"/>
<path d="M508.6 460.5L543.6 460.5" stroke="#ff0000"/>
<path d="M522.5 437L522.5 470" stroke="#ff0000"/>
<circle cx="522.6" cy="460.6" r="3.8" stroke="#fff" fill="none"/>
<path d="M508.6 550.5L543.6 550.5" stroke="#ff0000"/>
<path d="M522.5 540L522.5 573" stroke="#ff0000"/>
<circle cx="522.6" cy="550.2" r="2" stroke="#fff" fill="none"/>
<path d="M511.8 479.5L525.8 479.5" stroke="#ff0000"/>
<path d="M518.5 473L518.5 487" stroke="#ff0000"/>
<circle cx="518.8" cy="479.4" r="2.4" stroke="#fff" fill="none"/>
<path d="M511.8 531.5L525.8 531.5" stroke="#ff0000"/>
<path d="M518.5 523L518.5 539" stroke="#ff0000"/>
<circle cx="518.8" cy="531.3" r="2.4" stroke="#fff" fill="none"/>
<circle cx="518.8" cy="479.4" r="1" stroke="#fff" fill="#fff"/>
<circle cx="518.8" cy="531.3" r="1" stroke="#fff" fill="#fff"/>
<circle cx="522.6" cy="550.2" r="0.8" stroke="#fff" fill="#fff"/>
<path d="M499.61 497.22L491.33 482.87L476.98 474.59L460.42 474.59L446.07 482.87L437.79 497.22L437.79 513.78L446.07 528.13L460.42 536.41L476.98 536.41L491.33 528.13L499.61 513.78Z" stroke="#ff0000" fill="none"/>
<path d="M468.5 422L468.5 599" stroke="#ff0000" stroke-dasharray="30 4 6 4"/>
<path d="M491.88 499.29L508.3 494.89" stroke="#ff0000"/>
<circle cx="499.61" cy="497.22" r="3" stroke="#fff" stroke-width="2" fill="#000" style="stroke-width:2px"/>
<rect x="499" y="497" width="1" height="1" fill="#ff0000" stroke="none"/>
<path d="M485.67 488.53L497.69 476.51" stroke="#ff0000"/>
<circle cx="491.33" cy="482.87" r="3" stroke="#fff" stroke-width="2" fill="#000" style="stroke-width:2px"/>
<rect x="491" y="482" width="1" height="1" fill="#ff0000" stroke="none"/>
<path d="M474.91 482.32L479.31 465.9" stroke="#ff0000"/>
<circle cx="476.98" cy="474.59" r="3" stroke="#fff" stroke-width="2" fill="#000" style="stroke-width:2px"/>
<rect x="476" y="474" width="1" height="1" fill="#ff0000" stroke="none"/>
<path d="M462.49 482.32L458.09 465.9" stroke="#ff0000"/>
<circle cx="460.42" cy="474.59" r="3" stroke="#fff" stroke-width="2" fill="#000" style="stroke-width:2px"/>
<rect x="460" y="474" width="1" height="1" fill="#ff0000" stroke="none"/>
<path d="M451.73 488.53L439.71 476.51" stroke="#ff0000"/>
<circle cx="446.07" cy="482.87" r="3" stroke="#fff" stroke-width="2" fill="#000" style="stroke-width:2px"/>
<rect x="446" y="482" width="1" height="1" fill="#ff0000" stroke="none"/>
<path d="M445.52 499.29L429.1 494.89" stroke="#ff0000"/>
<circle cx="437.79" cy="497.22" r="3" stroke="#fff" stroke-width="2" fill="#000" style="stroke-width:2px"/>
<rect x="437" y="497" width="1" height="1" fill="#ff0000" stroke="none"/>
<path d="M445.52 511.71L429.1 516.11" stroke="#ff0000"/>
<circle cx="437.79" cy="513.78" r="3" stroke="#fff" stroke-width="2" fill="#000" style="stroke-width:2px"/>
<rect x="437" y="513" width="1" height="1" fill="#ff0000" stroke="none"/>
<path d="M451.73 522.47L439.71 534.49" stroke="#ff0000"/>
<circle cx="446.07" cy="528.13" r="3" stroke="#fff" stroke-width="2" fill="#000" style="stroke-width:2px"/>
<rect x="446" y="528" width="1" height="1" fill="#ff0000" stroke="none"/>
<path d="M462.49 528.68L458.09 545.1" stroke="#ff0000"/>
<circle cx="460.42" cy="536.41" r="3" stroke="#fff" stroke-width="2" fill="#000" style="stroke-width:2px"/>
<rect x="460" y="536" width="1" height="1" fill="#ff0000" stroke="none"/>
<path d="M474.91 528.68L479.31 545.1" stroke="#ff0000"/>
<circle cx="476.98" cy="536.41" r="3" stroke="#fff" stroke-width="2" fill="#000" style="stroke-width:2px"/>
<rect x="476" y="536" width="1" height="1" fill="#ff0000" stroke="none"/>
<path d="M485.67 522.47L497.69 534.49" stroke="#ff0000"/>
<circle cx="491.33" cy="528.13" r="3" stroke="#fff" stroke-width="2" fill="#000" style="stroke-width:2px"/>
<rect x="491" y="528" width="1" height="1" fill="#ff0000" stroke="none"/>
<path d="M491.88 511.71L508.3 516.11" stroke="#ff0000"/>
<circle cx="499.61" cy="513.78" r="3" stroke="#fff" stroke-width="2" fill="#000" style="stroke-width:2px"/>
<rect x="499" y="513" width="1" height="1" fill="#ff0000" stroke="none"/>
</svg>
<svg id="tb" width="1000" height="26" viewBox="0 0 1000 26">
<defs>
<linearGradient id="gdoc" x1="0" y1="0" x2="1" y2="1"><stop offset="0" stop-color="#ffffff"/><stop offset="1" stop-color="#a9c4cc"/></linearGradient>
<linearGradient id="gor" x1="0" y1="0" x2="0" y2="1"><stop offset="0" stop-color="#ffc090"/><stop offset="1" stop-color="#f07838"/></linearGradient>
<radialGradient id="glens" cx="0.4" cy="0.35" r="0.7"><stop offset="0" stop-color="#ffffff"/><stop offset="1" stop-color="#9cc0e4"/></radialGradient>
<linearGradient id="ghelp" x1="0" y1="0" x2="0" y2="1"><stop offset="0" stop-color="#2a66b0"/><stop offset="1" stop-color="#0c3c7c"/></linearGradient>
</defs>
<rect x="0" y="0" width="1000" height="22" fill="#f0f0f0"/>
<rect x="0" y="22" width="1000" height="1" fill="#a0a0a0"/>
<rect x="0" y="23" width="1000" height="1" fill="#ffffff"/>
<rect x="0" y="24" width="1000" height="1" fill="#cfcfcf"/>
<rect x="0" y="25" width="1000" height="1" fill="#808080"/>
<!-- icon 1: copy docs -->
<g stroke="#2c62a8" stroke-width="1.100" fill="url(#gdoc)">
<path d="M-2 4.500H9.500L12.500 7.500V13.500H-2Z"/><path d="M9.500 4.500V7.500H12.500" fill="none"/><path d="M2.500 8H12.500L15.500 11V17.500H2.500Z"/><path d="M12.500 8V11H15.500" fill="none"/></g>
<!-- icon 2: folder paste -->
<path d="M24 8L29 4L36 6L38 12L33 18.5L27 18L23.5 12Z" fill="#e8d8a0" stroke="#c8a030" stroke-width="1.2"/>
<path d="M26 4Q28 2.5 30 4.5L31 5.5" fill="#fff" stroke="#999" stroke-width="0.8"/>
<path d="M25.5 8H32L34.5 10.5V14.5H25.5Z" fill="url(#gdoc)" stroke="#2c62a8" stroke-width="1.2"/>
<!-- icon 3: brush -->
<path d="M60 6L53 13" stroke="#c07848" stroke-width="2.6"/><path d="M58 7.5L55 10.5" stroke="#e8b890" stroke-width="1"/>
<path d="M55 11L52 14" stroke="#606870" stroke-width="2.6"/>
<path d="M53.5 13L47.5 16.5L52 16.5L54.5 14.5Z" fill="#181818"/>
<!-- icon 4: match prop -->
<path d="M82.5 2.5L76 9H80L77 14L85 7.5H81L84.5 3.5Z" fill="#f8d820" stroke="#b08800" stroke-width="0.8"/>
<rect x="70.5" y="11.5" width="7" height="6" fill="url(#gor)" stroke="#143c8c" stroke-width="1.2"/>
<rect x="69" y="16" width="3" height="3" fill="#0060e0"/>
<!-- separators -->
<g stroke="#404040" stroke-width="1"><path d="M91.5 2V20M169.5 2V20M267.5 2V20M411.5 2V20M968.5 3V20"/></g>
<!-- undo / redo (disabled) -->
<g fill="none" stroke="#c4c4c4" stroke-width="2.8" stroke-linecap="round" stroke-linejoin="round">
<path d="M112.500 7Q110 4.500 106.500 6Q103.500 8 103.500 12.500"/><path d="M134.500 7Q137 4.500 140.500 6Q143.500 8 143.500 12.500"/></g>
<path d="M98 11.500L109 12.500L102.500 19Z" fill="#c4c4c4"/><path d="M149 11.500L138 12.500L144.500 19Z" fill="#c4c4c4"/>
<path d="M122 9.500H128L125 12.500Z" fill="#c8c8d0"/><path d="M158 9.500H164L161 12.500Z" fill="#c8c8d0"/>
<!-- pan hand -->
<path d="M177 7Q176 5 178 5L181 8L180 4.5Q181 3.5 182 4.5L184 8L184.5 5Q186 4.5 186 6L187 10L188.5 8Q190 8 189.5 10L187.5 15L184 17L180 13Z" fill="#c08888" stroke="#a06868" stroke-width="0.6"/>
<path d="M184.5 16.5L188.5 13.5L192 16V19H186Z" fill="#204c90"/>
<path d="M189 3V10M185.5 6.5H192.5" stroke="#204c90" stroke-width="1.2"/><path d="M189 2L190.5 4H187.5ZM189 11L190.5 9H187.5ZM184.5 6.5L186.5 5V8ZM193.5 6.5L191.5 5V8Z" fill="#204c90"/>
<!-- zoom icons -->
<g id="mag">
<path d="M208 13L213.5 18.5" stroke="#c08040" stroke-width="2.4" stroke-linecap="round"/>
<circle cx="204.500" cy="9" r="5.200" fill="url(#glens)" stroke="#707880" stroke-width="1.4"/>
</g>
<path d="M210 7H215M212.500 4.500V9.500M210 11H215" stroke="#204c90" stroke-width="1.1" fill="none"/>
<g transform="translate(23 0)"><path d="M208 13L213.500 18.500" stroke="#c08040" stroke-width="2.400" stroke-linecap="round"/><circle cx="204.500" cy="9" r="5.200" fill="url(#glens)" stroke="#707880" stroke-width="1.400"/><rect x="202" y="6.500" width="5" height="4.500" fill="none" stroke="#204c90" stroke-width="1.100"/><path d="M215 15.500V19H211.500Z" fill="#000"/></g>
<g transform="translate(46 0)"><path d="M208 13L213.500 18.500" stroke="#c08040" stroke-width="2.400" stroke-linecap="round"/><circle cx="204.500" cy="9" r="5.200" fill="url(#glens)" stroke="#707880" stroke-width="1.400"/><path d="M204 11Q204 5.500 210 5.500Q213.500 6 213.500 9" fill="none" stroke="#204c90" stroke-width="2"/><path d="M201.500 8.500H206.500L204 12Z" fill="#204c90"/></g>
<!-- properties -->
<rect x="273" y="3" width="3" height="4" fill="#e00020"/><rect x="276" y="3" width="3" height="4" fill="#f0e000"/><rect x="279" y="3" width="3" height="4" fill="#20c020"/><rect x="282" y="3" width="3" height="4" fill="#2040e0"/><rect x="285" y="3" width="3" height="4" fill="#e020e0"/>
<path d="M275 11L283 6.500L289 7.500V12L282 12.500L277 13Z" fill="#d8a090" stroke="#a07060" stroke-width="0.500"/>
<rect x="273.500" y="8.500" width="5" height="3" fill="#d8d840" stroke="#808020" stroke-width="0.500"/>
<path d="M275 14Q278 12.500 279.500 14Q277 15 275.500 16.500Q278 17.500 280 16.500" fill="none" stroke="#3868a8" stroke-width="1.200"/>
<path d="M283.500 18.500L286.500 12L289.500 18.500M284.500 16.500H288.500" fill="none" stroke="#303030" stroke-width="1.200"/>
<!-- design center -->
<rect x="297.500" y="3.500" width="15" height="15" fill="#d8e8f8" stroke="#204c90" stroke-width="1.400"/>
<path d="M299.500 6V17" stroke="#c8b020" stroke-width="1.600" stroke-dasharray="2 1.500"/>
<g fill="#b8cce4" stroke="#204c90" stroke-width="0.800"><rect x="303" y="5.500" width="3" height="3"/><rect x="308" y="5.500" width="3" height="3"/><rect x="303" y="10.500" width="3" height="3"/></g>
<rect x="308" y="10.500" width="3" height="3" fill="#f0e040" stroke="#204c90" stroke-width="0.800"/><rect x="304" y="15" width="6" height="2" fill="#f0e040"/>
<!-- tool palettes -->
<rect x="320.500" y="3.500" width="9" height="15" fill="#d8e8f8" stroke="#204c90" stroke-width="1.400"/>
<g fill="#88a8d0"><rect x="322.500" y="6" width="2.500" height="2.500"/><rect x="322.500" y="10" width="2.500" height="2.500"/><rect x="322.500" y="14" width="2.500" height="2.500"/></g>
<path d="M327 6H331Q334 6.500 334.500 10V13" fill="none" stroke="#204c90" stroke-width="1.300"/><path d="M332 12.500H337L334.500 15.500Z" fill="#204c90"/>
<rect x="332.500" y="15" width="3.500" height="3.500" fill="#f0e040" stroke="#204c90" stroke-width="0.800"/>
<!-- sheet set -->
<rect x="343" y="4" width="16" height="15" fill="#6898c0"/>
<path d="M343 10L350 5L359 8V14L351 18L343 15Z" fill="#c0c8d0"/><path d="M343 10L351 13L359 8M351 13V18" stroke="#e8ecf0" stroke-width="1" fill="none"/>
<ellipse cx="354" cy="11.500" rx="3" ry="2.500" fill="#a8b0b8" stroke="#e0e4e8" stroke-width="0.800"/>
<!-- markup -->
<path d="M369 8.500H381.500V18.500H369Z" fill="#d8d8d8" stroke="#9098a0" stroke-width="0.800"/><path d="M368 7H380V17H368Z" fill="#e8e8e8" stroke="#9098a0" stroke-width="0.800"/>
<path d="M367 6Q366 3 369 3.500Q371 2 373 3.500Q376 2 377 5Q380 5.500 378.500 8.500Q380 11.500 377 12Q376 14.500 373.500 13Q371 15 369.500 12.500Q366 12.500 367 9.500Q365 8 367 6Z" fill="#fff" stroke="#e02028" stroke-width="1.500"/>
<!-- calculator -->
<rect x="390" y="3" width="13" height="16" rx="1" fill="#202020"/><rect x="392" y="4.500" width="9" height="3" fill="#609060"/>
<g fill="#e03030"><rect x="392" y="9.500" width="2" height="2"/><rect x="395.500" y="9.500" width="2" height="2"/><rect x="399" y="9.500" width="2" height="2"/></g>
<g fill="#fff"><rect x="392" y="12.500" width="2" height="2"/><rect x="395.500" y="12.500" width="2" height="2"/><rect x="399" y="12.500" width="2" height="2"/><rect x="392" y="15.500" width="2" height="2"/><rect x="395.500" y="15.500" width="2" height="2"/><rect x="399" y="15.500" width="2" height="2"/></g>
<!-- help -->
<rect x="419" y="3.500" width="15" height="15" rx="3" fill="url(#ghelp)"/>
<text x="426.500" y="16" font-family="Liberation Sans" font-weight="bold" font-size="14" fill="#fff" text-anchor="middle">?</text>
<!-- toolbar end + grip -->
<path d="M441.500 0V22" stroke="#a8a8a8"/><path d="M443.500 0V22" stroke="#ffffff"/>
<path d="M448.500 0V21M452.500 0V21" stroke="#a8a8a8"/><path d="M449.500 0V21M450.500 0V21M453.500 0V21" stroke="#ffffff"/>
<!-- layers icon -->
<g id="lay" stroke="#506080" stroke-width="0.700"><path d="M459 13.500L467 10L475.500 13.500L467 17.500Z" fill="#b0bcc8"/><path d="M459 10.500L467 7L475.500 10.500L467 14.500Z" fill="#c8d0d8"/><path d="M459 7.500L467 4L475.500 7.500L467 11.500Z" fill="#dce4ec"/></g>
<!-- layer dropdown -->
<rect x="479" y="0" width="299" height="21" rx="2" fill="#ffffff"/>
<path d="M490 3.500Q494.500 3.500 494.500 8Q494.500 10 492.500 12V14H487.500V12Q485.500 10 485.500 8Q485.500 3.500 490 3.500Z" fill="#fff8c0" stroke="#c0a000" stroke-width="1.200"/><path d="M488 15.500H492M488.500 17.500H491.500" stroke="#505050" stroke-width="1.200"/>
<rect x="500" y="4.500" width="12" height="12" fill="#f0dc50"/><circle cx="506" cy="10.500" r="6" fill="#f8e048" stroke="#3878c0" stroke-width="1.400"/>
<circle cx="521.500" cy="8.500" r="4.500" fill="#c8d8f0" stroke="#6088c0" stroke-width="1.600" stroke-dasharray="2 1"/><circle cx="521.500" cy="8.500" r="1.600" fill="#6088c0"/>
<rect x="523.500" y="10.500" width="6" height="6" fill="#e8f0f8" stroke="#7090c0" stroke-width="1"/>
<path d="M535 10V7Q535 4 538 4Q540.500 4 541 6.500" fill="none" stroke="#a89000" stroke-width="1.800"/>
<rect x="538" y="8" width="8.500" height="8" fill="#e8d850" stroke="#988000" stroke-width="1"/><path d="M540.500 9V15M543 9V15" stroke="#988000" stroke-width="0.800"/>
<rect x="550.500" y="6.500" width="9" height="9" fill="#fff" stroke="#000" stroke-width="1.300"/>
<ellipse cx="567.500" cy="11" rx="2.300" ry="3.900" fill="none" stroke="#505050" stroke-width="1.100"/>
<path d="M766.500 9H775L770.750 13.500Z" fill="#000"/>
<!-- layer state icons -->
<g stroke="#506080" stroke-width="0.700"><path d="M782 14L790 11L797.500 14L790 17.500Z" fill="#e8d040"/><path d="M782 10.500L790 7.500L797.500 10.500L790 14Z" fill="#c8d0d8"/><path d="M782 7.500L790 4.500L797.500 7.500L790 11Z" fill="#dce4ec"/></g>
<path d="M781.500 19V15.500H785" fill="none" stroke="#204c90" stroke-width="1.200"/><path d="M781.500 19L785 15.500" stroke="#204c90" stroke-width="1.200"/>
<g stroke="#506080" stroke-width="0.700"><path d="M805 14L813 11L821 14L813 17.500Z" fill="#b0bcc8"/><path d="M805 10.500L813 7.500L821 10.500L813 14Z" fill="#c8d0d8"/></g>
<path d="M809 9Q809 4 814 4Q818.500 4.500 818 9" fill="none" stroke="#3060a8" stroke-width="2"/><path d="M806 7H812L809 11Z" fill="#3060a8"/>
<path d="M827.500 0V22M834.500 0V21" stroke="#a8a8a8"/><path d="M829.500 0V22M835.500 0V21M836.500 0V21" stroke="#ffffff"/><path d="M832.500 0V21" stroke="#b8b8b8"/>
<!-- text style -->
<path d="M847.500 17.500L852.500 4H854L859 17.500M849.500 13H857" fill="none" stroke="#101010" stroke-width="1.700"/>
<path d="M861.500 7L856 13.500" stroke="#c07848" stroke-width="2.200"/><path d="M856.500 13L852 18L855.500 17Z" fill="#202020"/>
<rect x="867" y="0" width="98" height="21" rx="2" fill="#ffffff"/>
<g fill="none" stroke="#585858" stroke-width="1.100" transform="translate(871 4.500)">
<path d="M1 1.500H10.500M5.700 1.500V10.500M0 10.500H11.500"/>
<g transform="translate(12.500 0)"><path d="M1 2.500L5 1M0 4.500H6M3 2V12M3 5.500L0 9.500M3 5.500L6 8.500M7 1.500H11.500V5H7ZM6.500 7H12M9.300 7V11.500M7 9.200H11.500M6.200 11.500H12"/></g>
<g transform="translate(25 0)"><path d="M6 0V1.500M0.500 4V2H11.500V4M2.500 4.700H9.500L6.500 6.700M6.300 6.700V11Q6 12 4 11.500M0 8.200H12"/></g>
</g>
<path d="M953 9H961.500L957.250 13.500Z" fill="#000"/>
<rect x="996" y="0" width="6" height="21" rx="2" fill="#ffffff"/>
<!-- dimension style -->
<path d="M990 4L983 12.500" stroke="#c07848" stroke-width="2.200"/><path d="M984 11.500L980 16L983.500 15.500Z" fill="#202020"/>
<path d="M975.500 13V20M991.500 13V20M975.500 16.500H991.500" stroke="#000" stroke-width="1.100" fill="none"/><path d="M975.500 16.500L978.500 15V18ZM991.500 16.500L988.500 15V18Z" fill="#000"/>
</svg>
<svg id="sb" width="1000" height="3" viewBox="0 0 1000 3"><rect width="1000" height="3" fill="#e8e8e8"/><rect x="13" y="0" width="2" height="3" fill="#000"/><rect x="2" y="1" width="3" height="2" fill="#202020"/></svg>

</body></html>
